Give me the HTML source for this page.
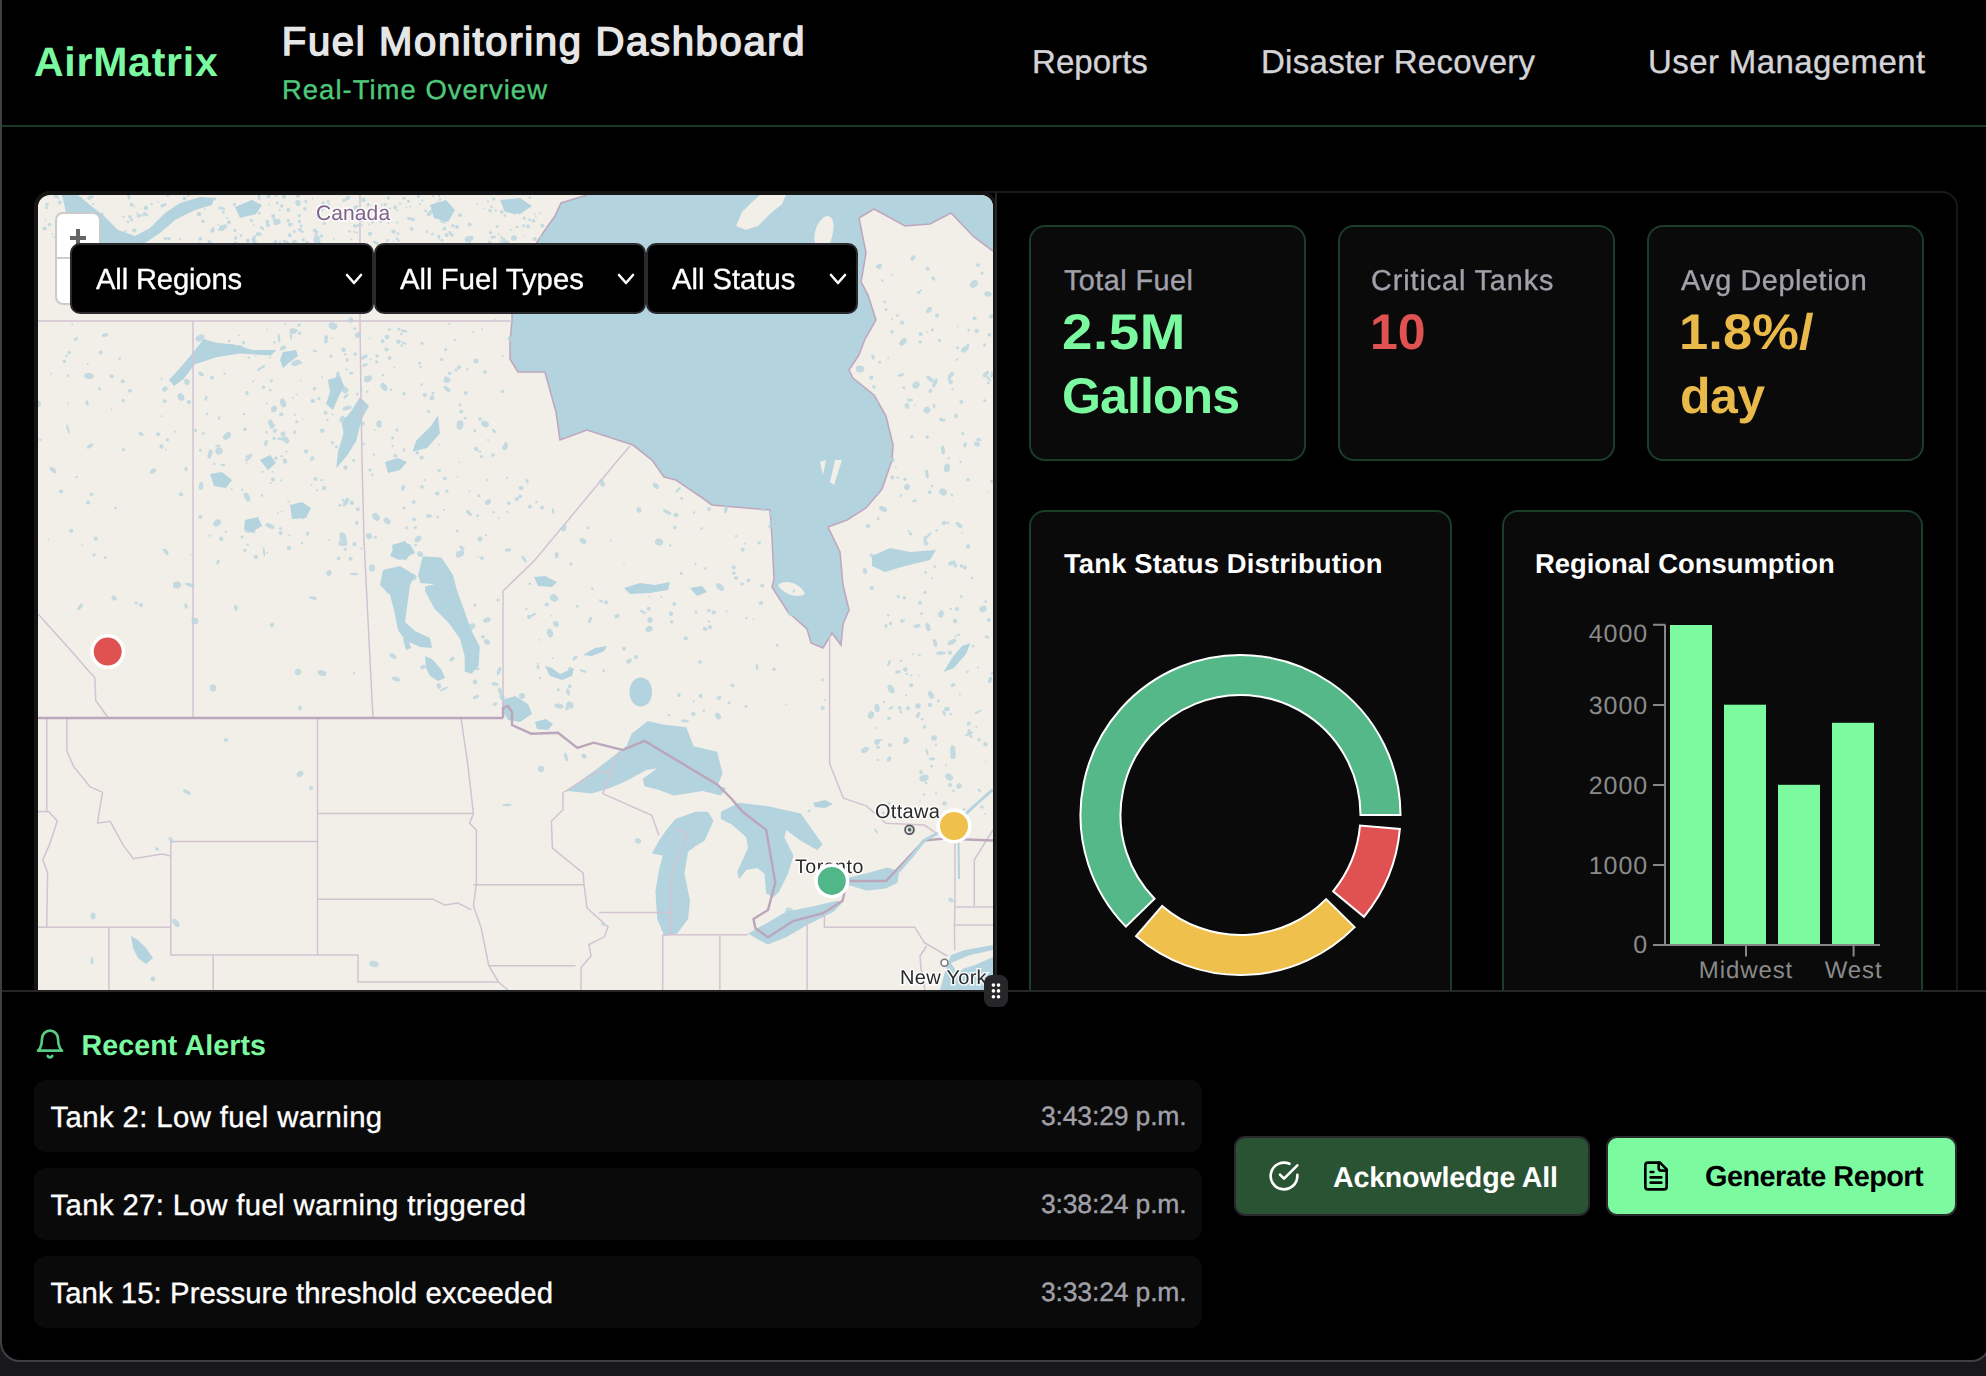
<!DOCTYPE html>
<html><head><meta charset="utf-8">
<style>
*{margin:0;padding:0;box-sizing:border-box}
html,body{width:1986px;height:1376px;overflow:hidden;background:#18181b;font-family:"Liberation Sans",sans-serif;text-rendering:geometricPrecision}
.a{position:absolute;white-space:nowrap;line-height:1}
.rg{-webkit-text-stroke:0.35px currentColor}
#win{position:absolute;left:0;top:-40px;width:1991px;height:1402px;background:#000;border:2px solid #3f3f46;border-radius:20px;overflow:hidden}
</style></head>
<body>
<div id="win"></div>

<!-- header -->
<div class="a" id="t_air" style="left:34px;top:42px;font-size:41px;font-weight:700;color:#7af9a0;letter-spacing:0.75px">AirMatrix</div>
<div class="a" id="t_title" style="left:281.8px;top:22px;font-size:40px;font-weight:400;color:#e6e6e6;letter-spacing:1.68px;-webkit-text-stroke:1.5px #e6e6e6">Fuel Monitoring Dashboard</div>
<div class="a rg" id="t_sub" style="left:282px;top:76.2px;font-size:27.4px;color:#4fca7a;letter-spacing:1.05px">Real-Time Overview</div>
<div class="a rg" id="t_nav1" style="left:1032px;top:45.1px;font-size:33px;color:#d4d4d8;letter-spacing:0.05px">Reports</div>
<div class="a rg" id="t_nav2" style="left:1261px;top:45.1px;font-size:33px;color:#d4d4d8;letter-spacing:0.28px">Disaster Recovery</div>
<div class="a rg" id="t_nav3" style="left:1648px;top:45.1px;font-size:33px;color:#d4d4d8;letter-spacing:0.4px">User Management</div>
<div style="position:absolute;left:2px;top:125px;width:1984px;height:2px;background:#173a26"></div>

<div id="clip" style="position:absolute;left:0;top:0;width:1986px;height:990px;overflow:hidden">
<!-- outer container border -->
<div style="position:absolute;left:34px;top:191px;width:1924px;height:820px;border:2px solid #181818;border-radius:16px"></div>

<!-- MAP -->
<div id="map" style="position:absolute;left:34px;top:191px;width:963px;height:830px;border:4px solid #151515;border-radius:16px;overflow:hidden;background:#f2efe9">
<svg width="955" height="822" viewBox="38 195 955 822" style="position:absolute;left:0;top:0">
<path fill="#b3d3de" d="M587,195 L561,203 L555,216 L545,230 L537,242 L525,280 L512,314 L512,321 L510,341 L510,359 L518,372 L545,372 L556,412 L560,440 L587,430 L633,445 L652,460 L664,477 L676,480 L701,497 L712,505 L770,510 L772,537 L774,579 L772,587 L788,612 L807,629 L811,643 L823,648 L832,633 L841,645 L843,624 L849,610 L843,585 L840,552 L828,527 L847,520 L866,508 L882,489 L892,460 L893,445 L886,416 L874,395 L853,378 L849,370 L859,355 L865,339 L876,320 L868,295 L861,282 L866,253 L859,218 L874,209 L905,226 L930,224 L951,213 L974,237 L993,251 L993,195 Z"/>
<path fill="none" stroke="#bfa8bf" stroke-width="1.6" d="M587,195 L561,203 L555,216 L545,230 L537,242 L525,280 L512,314 L512,321 L510,341 L510,359 L518,372 L545,372 L556,412 L560,440 L587,430 L633,445 L652,460 L664,477 L676,480 L701,497 L712,505 L770,510 L772,537 L774,579 L772,587 L788,612 L807,629 L811,643 L823,648 L832,633 L841,645 L843,624 L849,610 L843,585 L840,552 L828,527 L847,520 L866,508 L882,489 L892,460 L893,445 L886,416 L874,395 L853,378 L849,370 L859,355 L865,339 L876,320 L868,295 L861,282 L866,253 L859,218 L874,209 L905,226 L930,224 L951,213 L974,237 L993,251"/>
<g fill="#b3d3de"><path d="M62,195 L78,195 L90,205 L104,216 L118,230 L135,236 L150,228 L165,213 L180,203 L200,197 L214,198 L212,205 L195,210 L175,220 L160,233 L145,243 L120,246 L100,246 L80,232 L66,212 Z"/><path d="M169,380 L180,368 L191,355 L203.6,339 L216.3,342.7 L234.5,344.5 L252.7,350 L276.3,350 L270.9,355.4 L240,353.6 L216.3,357.3 L194.5,364.5 L183.6,379 L174,386 Z"/><path d="M283,352 L296,350 L298,356 L290,362 L283,368 L280,360 Z"/><path d="M360,397 L369,406 L361.7,419 L356.3,440.8 L347.2,455.4 L336.3,468 L338,451.8 L343.5,433.6 L341.7,422.7 L350.8,411.8 Z"/><path d="M328,380 L340,376 L344,386 L338,398 L333,410 L326,404 L330,392 Z"/><path d="M438,415.4 L439.9,433.6 L427,448 L412.6,451.7 L416.2,440.8 L430.8,426.3 Z"/><path d="M385,462 L398,458 L407,462 L400,470 L388,473 Z"/><path d="M290,505 L302,502 L311,508 L306,518 L292,519 Z"/><path d="M392,545 L405,541 L413,550 L406,560 L394,558 Z"/><path d="M245,520 L258,517 L262,526 L252,532 L244,529 Z"/><path d="M210,474 L222,472 L232,480 L226,488 L214,486 Z"/><path d="M235,207 L252,200 L262,205 L256,214 L240,218 Z"/><path d="M430,205 L446,200 L455,210 L448,222 L434,218 Z"/><path d="M500,200 L520,198 L532,206 L520,214 L505,212 Z"/><path d="M260,460 L270,455 L276,463 L268,470 Z"/><path d="M422.8,556.3 L441.4,557.4 L453,574.9 L456.5,588.8 L462.3,605.1 L470.5,628.4 L479.8,647 L478.6,665.6 L471.6,673.7 L464.7,671.4 L464.7,656.3 L460,638.8 L448.4,622.6 L434.4,608.6 L425.1,591.2 L425.1,586.5 L434.4,584.2 L420.5,583 L418.1,574.9 Z"/><path d="M383,570 L400,566 L415,575 L410,585 L408,600 L405,622 L415,631 L430,638 L432,648 L420,647 L405,640 L398,630 L394,610 L390,595 L380,585 Z"/><path d="M425,656 L432,659 L441,669 L445,678 L438,681 L430,676 L426,668 Z"/><path d="M395,545 L410,544 L415,553 L400,560 L390,556 Z"/><path d="M403,639 L408,638 L411,648 L406,650 Z"/><path d="M640.6,677.5 C648,677.5 652,684 652,692 C652,701 647,706.5 640.6,706.5 C634,706.5 629.5,700 629.5,692 C629.5,684 634,677.5 640.6,677.5 Z"/><path d="M502,700 L515,696 L528,704 L532,714 L520,722 L508,720 L503,712 Z"/><path d="M535,722 L546,719 L553,724 L548,730 L537,729 Z"/><path d="M545,666 L552,668 L560,674 L574,668 L572,676 L562,680 L550,676 Z"/><path d="M583,655 L595,648 L607,646 L604,651 L592,656 Z"/><path d="M534,577 L545,576 L557,582 L552,587 L538,586 Z"/><path d="M624,588 L640,583 L655,585 L670,582 L668,590 L650,593 L630,594 Z"/><path d="M690,588 L702,586 L707,592 L697,596 Z"/><path d="M564.5,791.8 L595.4,770 L626.3,746.3 L631.8,733.6 L648.1,720.9 L662.7,724.5 L686.3,727.3 L693.6,746.3 L717.2,751.8 L722.6,773.6 L717.2,786.3 L726.3,788.1 L720.8,795.4 L702.6,790.9 L673.6,795.4 L659,790 L644.5,786.3 L642.7,779 L657.2,768.2 L646.3,770 L626.3,780.9 L610,788.1 L591.8,793.6 L568.2,790.9 Z"/><path d="M675.4,819 L695.4,811.8 L708,811.8 L713.5,820.8 L704.5,840.8 L695.4,846.3 L688.1,851.7 L684.5,873.5 L690,900.8 L688.1,919 L677.2,933.5 L664.5,936.2 L657.2,919 L655.4,891.7 L659,869.9 L662.7,855.4 L651.8,853.6 L659,840.8 L666.3,829.9 Z"/><path d="M720.8,811.8 L739,802.7 L768,806.3 L800.8,813.6 L809.9,826.3 L822.6,844.5 L817.1,849.9 L800.8,840.8 L786.2,829.9 L784.4,837.2 L793.5,855.4 L788.1,873.5 L779,891.7 L773.5,897.2 L766.2,893.5 L764.4,873.5 L757.2,868.1 L746.3,869.9 L739,879 L737.2,871.7 L748,848.1 L746.3,837.2 L731.7,824.5 L720.8,819 Z"/><path d="M748.1,933.5 L764.4,924.4 L786.2,911.7 L813.5,906.3 L837.1,900.8 L842.6,902.6 L833.5,911.7 L808,924.4 L786.2,937.2 L768,944.4 L757.2,939 Z"/><path d="M843.4,879 L866.5,873.2 L887.7,867.5 L899.3,871.3 L897.3,882.9 L885.8,888.6 L866.5,890.6 L847.3,884.8 Z"/><path d="M813,803 L825,800 L833,804 L825,808 L815,807 Z"/><path d="M131,936 L138,940 L146,948 L153,958 L146,964 L138,958 L133,948 Z"/><path d="M943.5,672 L952,658 L962,646 L970.5,643 L966,654 L954,668 Z"/><path d="M872,556 L890,548 L910,552 L936,550 L930,560 L905,566 L885,572 L872,566 Z"/><path d="M957.5,842 L959.5,842 L960,879 L958,879 Z"/><path d="M940,990 L946,968 L951,955 L965,950 L993,945 L993,990 Z"/></g>
<g fill="#f2efe9"><path d="M951,963 L970,955 L993,950 L993,957 L975,965 L956,971 Z"/><path d="M736,226 L742,212 L752,202 L760,195 L786,195 L782,204 L770,214 L758,226 L746,230 Z"/><path d="M815,243 C812,232 820,216 828,216 C836,218 834,232 830,243 Z"/><path d="M778,585 C784,579 800,582 805,594 C800,598 784,596 778,585 Z"/><path d="M820,462 L826,460 L823,475 Z"/><path d="M835,460 L842,460 L834,485 L830,482 Z"/></g>
<g fill="none" stroke="#d2c3d2" stroke-width="1.5"><path d="M38,321 H512"/><path d="M360,195 V321 L361,400 L362,460 L364,540 L368,620 L370,660 L373,718"/><path d="M193,321 V718"/><path d="M38,614 L51.5,629 L72.7,652.5 L86,668 L94.8,677.6 L95.8,700.7 L108.3,718"/><path d="M630,446 L618,460 L535,560 L503,591 V708"/><path d="M829.6,635 V763.5 L843.4,798.2 L866.5,805.9 L885.8,823.2 L924.3,825.1 L935.8,832.8"/><path d="M46.7,718 V811.6 L48.6,811.6 L57.3,821 L49.6,844.4 L42.8,859.8 L47.6,873 L46.7,927.2"/><path d="M38,811.6 H48"/><path d="M66.9,718 V751 L73.6,766.4 L90,786.6 L102.5,792.4 L98.6,815.5 L97.7,823.2 L110.2,821.3 L122.7,844.4 L133.3,858.8 L162.2,854 L170.8,855.9"/><path d="M170.8,841.5 H317.5 M170.8,841.5 V955 H358 V982 H498.5"/><path d="M38,927.2 H170.8 M108.9,927.2 V990 M213.2,955 V990"/><path d="M317.5,718 V955 M317.5,813.6 H473.4 M317.5,899.2 H433 L444.6,905 L458,903 L471.5,909.8"/><path d="M461,718 L467.7,763.5 L473.4,813.6 L469.6,823.2 L476.3,830 L476.3,884.8 L473.4,906 L481,927.2 L488.8,965.7 L498.5,982 L508,990"/><path d="M473.4,884.8 H584 M488.8,965.7 H575.5"/><path d="M584,884.8 L587,908 L608,927 L604.4,936.8 L589,944.5 L591,956 L581,967.6 L581,990"/><path d="M563,791.4 V809.7 L551.4,821.3 L552.4,848.2 L583.2,873.2 L584,884.8"/><path d="M602.7,793.6 L651.8,815.4 L659,835.4"/><path d="M564.5,791.8 L597.2,771.8 L610,771.8 M619,751.8 L602.7,793.6"/><path d="M673.6,828.1 L688.1,833.6 L671.8,873.5 L670,935.3"/><path d="M599,912.6 H671.8 M662.7,934.8 H748 M662.7,934.8 V990 M719.9,934.8 V990 M807.1,919.5 V990"/><path d="M824.4,915.3 V927.2 H914.7 L924.3,942.6 L947.4,956"/><path d="M955,840.5 V900 L954.5,925 L954.7,950 M974.3,906 V859.8 L993,830 M955,907 H993 M955,925 H993 M926.5,946 L920,956 L921,968.5 L925,990"/></g>
<g fill="none" stroke="#bba6bb" stroke-width="2.4"><path d="M38,718 H503"/><path d="M503,718 V708 L508,706 L512,712 L512,725 L531.2,733.7 L558,732.7 L577.4,748 L593.6,742.7 L622.7,750 L644.5,740.9 L717.2,784.5 L731.7,799 L742.6,811.8 L766.2,829.9 L775.3,882.6 L768,909.9 L753.5,919 L755.3,928.1 L768,937.2 L793.5,920.8 L822.6,913.5 L842.6,900.8 L847,881 L886,881 L924.3,840.5 L943.5,838.6 L993,840.5"/></g>
<g fill="#b3d3de" opacity="0.75"><ellipse cx="304" cy="250" rx="3.8" ry="1.2" transform="rotate(96 304 250)"/><ellipse cx="317" cy="216" rx="3.3" ry="1.1" transform="rotate(78 317 216)"/><ellipse cx="222" cy="228" rx="3.0" ry="3.1" transform="rotate(22 222 228)"/><ellipse cx="271" cy="424" rx="4.8" ry="2.4" transform="rotate(71 271 424)"/><ellipse cx="512" cy="212" rx="4.5" ry="1.7" transform="rotate(26 512 212)"/><ellipse cx="238" cy="308" rx="4.4" ry="1.5" transform="rotate(105 238 308)"/><ellipse cx="404" cy="331" rx="3.4" ry="1.2" transform="rotate(11 404 331)"/><ellipse cx="266" cy="443" rx="3.0" ry="1.8" transform="rotate(105 266 443)"/><ellipse cx="345" cy="304" rx="4.3" ry="2.7" transform="rotate(44 345 304)"/><ellipse cx="384" cy="387" rx="4.6" ry="2.8" transform="rotate(52 384 387)"/><ellipse cx="514" cy="238" rx="3.0" ry="2.9" transform="rotate(27 514 238)"/><ellipse cx="356" cy="209" rx="3.8" ry="2.9" transform="rotate(103 356 209)"/><ellipse cx="480" cy="310" rx="3.9" ry="2.5" transform="rotate(104 480 310)"/><ellipse cx="346" cy="502" rx="4.8" ry="2.2" transform="rotate(120 346 502)"/><ellipse cx="219" cy="451" rx="3.8" ry="3.5" transform="rotate(148 219 451)"/><ellipse cx="291" cy="336" rx="3.8" ry="1.1" transform="rotate(83 291 336)"/><ellipse cx="254" cy="238" rx="1.7" ry="2.9" transform="rotate(23 254 238)"/><ellipse cx="279" cy="338" rx="4.5" ry="1.2" transform="rotate(81 279 338)"/><ellipse cx="376" cy="517" rx="4.4" ry="3.2" transform="rotate(50 376 517)"/><ellipse cx="333" cy="326" rx="4.6" ry="3.4" transform="rotate(27 333 326)"/><ellipse cx="256" cy="280" rx="2.3" ry="2.2" transform="rotate(106 256 280)"/><ellipse cx="284" cy="196" rx="3.0" ry="1.9" transform="rotate(102 284 196)"/><ellipse cx="505" cy="447" rx="3.3" ry="2.5" transform="rotate(122 505 447)"/><ellipse cx="217" cy="523" rx="4.2" ry="3.2" transform="rotate(144 217 523)"/><ellipse cx="326" cy="341" rx="1.9" ry="2.6" transform="rotate(11 326 341)"/><ellipse cx="222" cy="271" rx="2.1" ry="1.9" transform="rotate(9 222 271)"/><ellipse cx="200" cy="250" rx="1.9" ry="1.9" transform="rotate(5 200 250)"/><ellipse cx="480" cy="419" rx="2.0" ry="1.6" transform="rotate(63 480 419)"/><ellipse cx="317" cy="240" rx="4.5" ry="3.5" transform="rotate(84 317 240)"/><ellipse cx="355" cy="226" rx="1.9" ry="1.9" transform="rotate(48 355 226)"/><ellipse cx="465" cy="254" rx="1.6" ry="3.4" transform="rotate(95 465 254)"/><ellipse cx="247" cy="393" rx="1.6" ry="2.3" transform="rotate(176 247 393)"/><ellipse cx="476" cy="449" rx="2.4" ry="1.9" transform="rotate(30 476 449)"/><ellipse cx="447" cy="389" rx="4.2" ry="1.8" transform="rotate(40 447 389)"/><ellipse cx="460" cy="554" rx="4.5" ry="3.0" transform="rotate(147 460 554)"/><ellipse cx="437" cy="278" rx="3.3" ry="1.9" transform="rotate(5 437 278)"/><ellipse cx="209" cy="297" rx="2.4" ry="2.7" transform="rotate(172 209 297)"/><ellipse cx="343" cy="537" rx="5.0" ry="3.4" transform="rotate(66 343 537)"/><ellipse cx="271" cy="278" rx="2.2" ry="1.5" transform="rotate(112 271 278)"/><ellipse cx="488" cy="502" rx="3.2" ry="2.6" transform="rotate(144 488 502)"/><ellipse cx="227" cy="436" rx="4.7" ry="3.0" transform="rotate(135 227 436)"/><ellipse cx="353" cy="260" rx="4.3" ry="1.8" transform="rotate(144 353 260)"/><ellipse cx="511" cy="339" rx="2.9" ry="3.4" transform="rotate(130 511 339)"/><ellipse cx="254" cy="241" rx="2.0" ry="3.3" transform="rotate(145 254 241)"/><ellipse cx="247" cy="497" rx="4.9" ry="2.6" transform="rotate(63 247 497)"/><ellipse cx="376" cy="243" rx="1.5" ry="3.4" transform="rotate(117 376 243)"/><ellipse cx="369" cy="536" rx="3.0" ry="3.2" transform="rotate(149 369 536)"/><ellipse cx="268" cy="287" rx="2.5" ry="1.6" transform="rotate(106 268 287)"/><ellipse cx="283" cy="348" rx="2.0" ry="3.3" transform="rotate(64 283 348)"/><ellipse cx="347" cy="408" rx="4.7" ry="2.1" transform="rotate(165 347 408)"/><ellipse cx="361" cy="389" rx="3.3" ry="1.0" transform="rotate(79 361 389)"/><ellipse cx="259" cy="196" rx="4.3" ry="1.4" transform="rotate(85 259 196)"/><ellipse cx="432" cy="398" rx="2.6" ry="2.3" transform="rotate(100 432 398)"/><ellipse cx="451" cy="234" rx="3.5" ry="1.6" transform="rotate(50 451 234)"/><ellipse cx="447" cy="380" rx="3.5" ry="2.9" transform="rotate(164 447 380)"/><ellipse cx="342" cy="419" rx="3.3" ry="2.3" transform="rotate(125 342 419)"/><ellipse cx="345" cy="390" rx="3.2" ry="3.4" transform="rotate(126 345 390)"/><ellipse cx="480" cy="539" rx="2.4" ry="2.4" transform="rotate(170 480 539)"/><ellipse cx="469" cy="245" rx="1.9" ry="2.1" transform="rotate(13 469 245)"/><ellipse cx="277" cy="222" rx="3.8" ry="3.0" transform="rotate(161 277 222)"/><ellipse cx="249" cy="456" rx="3.8" ry="1.4" transform="rotate(159 249 456)"/><ellipse cx="510" cy="275" rx="4.8" ry="2.0" transform="rotate(88 510 275)"/><ellipse cx="517" cy="499" rx="2.1" ry="2.1" transform="rotate(93 517 499)"/><ellipse cx="309" cy="266" rx="2.6" ry="2.8" transform="rotate(4 309 266)"/><ellipse cx="377" cy="356" rx="1.6" ry="1.8" transform="rotate(112 377 356)"/><ellipse cx="364" cy="218" rx="4.9" ry="3.0" transform="rotate(175 364 218)"/><ellipse cx="234" cy="292" rx="1.6" ry="2.9" transform="rotate(49 234 292)"/><ellipse cx="241" cy="349" rx="4.7" ry="3.0" transform="rotate(47 241 349)"/><ellipse cx="248" cy="530" rx="3.5" ry="2.8" transform="rotate(16 248 530)"/><ellipse cx="218" cy="446" rx="3.0" ry="1.2" transform="rotate(169 218 446)"/><ellipse cx="403" cy="488" rx="1.8" ry="3.1" transform="rotate(12 403 488)"/><ellipse cx="476" cy="361" rx="2.7" ry="2.4" transform="rotate(167 476 361)"/><ellipse cx="286" cy="242" rx="3.3" ry="1.6" transform="rotate(20 286 242)"/><ellipse cx="252" cy="213" rx="2.2" ry="1.8" transform="rotate(55 252 213)"/><ellipse cx="443" cy="301" rx="3.3" ry="1.4" transform="rotate(62 443 301)"/><ellipse cx="206" cy="286" rx="1.6" ry="2.8" transform="rotate(99 206 286)"/><ellipse cx="261" cy="368" rx="4.8" ry="1.3" transform="rotate(147 261 368)"/><ellipse cx="338" cy="376" rx="4.4" ry="2.0" transform="rotate(91 338 376)"/><ellipse cx="420" cy="554" rx="2.7" ry="3.1" transform="rotate(127 420 554)"/><ellipse cx="404" cy="343" rx="2.7" ry="1.1" transform="rotate(23 404 343)"/><ellipse cx="223" cy="465" rx="2.4" ry="1.4" transform="rotate(15 223 465)"/><ellipse cx="469" cy="513" rx="3.8" ry="1.7" transform="rotate(44 469 513)"/><ellipse cx="294" cy="363" rx="2.1" ry="2.1" transform="rotate(47 294 363)"/><ellipse cx="508" cy="550" rx="3.4" ry="1.6" transform="rotate(174 508 550)"/><ellipse cx="299" cy="325" rx="1.5" ry="2.0" transform="rotate(85 299 325)"/><ellipse cx="361" cy="268" rx="3.3" ry="1.0" transform="rotate(48 361 268)"/><ellipse cx="229" cy="341" rx="1.6" ry="1.1" transform="rotate(55 229 341)"/><ellipse cx="274" cy="409" rx="3.4" ry="2.9" transform="rotate(118 274 409)"/><ellipse cx="429" cy="516" rx="2.9" ry="1.8" transform="rotate(177 429 516)"/><ellipse cx="248" cy="459" rx="3.8" ry="1.1" transform="rotate(150 248 459)"/><ellipse cx="485" cy="424" rx="4.1" ry="3.0" transform="rotate(25 485 424)"/><ellipse cx="368" cy="379" rx="4.4" ry="3.0" transform="rotate(149 368 379)"/><ellipse cx="387" cy="521" rx="3.9" ry="2.7" transform="rotate(41 387 521)"/><ellipse cx="210" cy="244" rx="2.8" ry="1.3" transform="rotate(150 210 244)"/><ellipse cx="379" cy="424" rx="3.7" ry="2.7" transform="rotate(88 379 424)"/><ellipse cx="201" cy="486" rx="4.1" ry="2.3" transform="rotate(96 201 486)"/><ellipse cx="411" cy="219" rx="4.1" ry="1.6" transform="rotate(13 411 219)"/><ellipse cx="285" cy="461" rx="2.2" ry="2.8" transform="rotate(176 285 461)"/><ellipse cx="358" cy="335" rx="3.2" ry="2.7" transform="rotate(138 358 335)"/><ellipse cx="397" cy="430" rx="1.8" ry="1.4" transform="rotate(46 397 430)"/><ellipse cx="438" cy="306" rx="3.5" ry="1.0" transform="rotate(11 438 306)"/><ellipse cx="286" cy="440" rx="3.9" ry="2.7" transform="rotate(52 286 440)"/><ellipse cx="365" cy="365" rx="3.1" ry="1.3" transform="rotate(161 365 365)"/><ellipse cx="264" cy="552" rx="4.8" ry="1.0" transform="rotate(83 264 552)"/><ellipse cx="462" cy="548" rx="3.1" ry="1.7" transform="rotate(38 462 548)"/><ellipse cx="503" cy="272" rx="3.5" ry="1.4" transform="rotate(94 503 272)"/><ellipse cx="505" cy="243" rx="4.4" ry="2.3" transform="rotate(160 505 243)"/><ellipse cx="425" cy="279" rx="4.6" ry="2.2" transform="rotate(4 425 279)"/><ellipse cx="201" cy="374" rx="3.1" ry="1.8" transform="rotate(25 201 374)"/><ellipse cx="310" cy="310" rx="4.4" ry="1.0" transform="rotate(135 310 310)"/><ellipse cx="469" cy="239" rx="4.7" ry="2.8" transform="rotate(162 469 239)"/><ellipse cx="293" cy="331" rx="2.9" ry="3.5" transform="rotate(106 293 331)"/><ellipse cx="315" cy="351" rx="2.5" ry="1.1" transform="rotate(18 315 351)"/><ellipse cx="467" cy="299" rx="4.8" ry="1.6" transform="rotate(48 467 299)"/><ellipse cx="364" cy="264" rx="2.8" ry="3.4" transform="rotate(159 364 264)"/><ellipse cx="460" cy="425" rx="4.7" ry="3.4" transform="rotate(99 460 425)"/><ellipse cx="430" cy="213" rx="4.1" ry="2.1" transform="rotate(135 430 213)"/><ellipse cx="406" cy="299" rx="1.7" ry="3.3" transform="rotate(23 406 299)"/><ellipse cx="351" cy="320" rx="2.5" ry="2.8" transform="rotate(176 351 320)"/><ellipse cx="283" cy="434" rx="2.6" ry="2.4" transform="rotate(71 283 434)"/><ellipse cx="254" cy="254" rx="2.2" ry="3.3" transform="rotate(89 254 254)"/><ellipse cx="270" cy="526" rx="5.0" ry="2.1" transform="rotate(25 270 526)"/><ellipse cx="262" cy="228" rx="2.7" ry="1.2" transform="rotate(43 262 228)"/><ellipse cx="283" cy="403" rx="4.6" ry="2.9" transform="rotate(74 283 403)"/><ellipse cx="332" cy="386" rx="2.8" ry="1.8" transform="rotate(11 332 386)"/><ellipse cx="289" cy="548" rx="1.9" ry="2.3" transform="rotate(113 289 548)"/><ellipse cx="476" cy="274" rx="2.4" ry="1.6" transform="rotate(72 476 274)"/><ellipse cx="343" cy="543" rx="4.5" ry="3.2" transform="rotate(4 343 543)"/><ellipse cx="210" cy="454" rx="4.6" ry="2.2" transform="rotate(106 210 454)"/><ellipse cx="200" cy="338" rx="4.7" ry="3.1" transform="rotate(154 200 338)"/><ellipse cx="511" cy="286" rx="1.9" ry="1.4" transform="rotate(94 511 286)"/><ellipse cx="418" cy="539" rx="4.0" ry="2.6" transform="rotate(138 418 539)"/><ellipse cx="346" cy="396" rx="1.6" ry="3.0" transform="rotate(42 346 396)"/><ellipse cx="494" cy="431" rx="2.6" ry="1.3" transform="rotate(45 494 431)"/><ellipse cx="404" cy="450" rx="1.9" ry="1.2" transform="rotate(94 404 450)"/><ellipse cx="387" cy="337" rx="2.3" ry="2.5" transform="rotate(2 387 337)"/><ellipse cx="296" cy="363" rx="4.9" ry="2.6" transform="rotate(159 296 363)"/><ellipse cx="352" cy="281" rx="2.4" ry="3.4" transform="rotate(127 352 281)"/><ellipse cx="298" cy="203" rx="3.2" ry="2.7" transform="rotate(76 298 203)"/><ellipse cx="282" cy="439" rx="4.7" ry="1.6" transform="rotate(6 282 439)"/><ellipse cx="90" cy="446" rx="3.9" ry="1.5" transform="rotate(143 90 446)"/><ellipse cx="153" cy="471" rx="2.2" ry="3.4" transform="rotate(56 153 471)"/><ellipse cx="165" cy="389" rx="2.3" ry="2.9" transform="rotate(53 165 389)"/><ellipse cx="186" cy="469" rx="2.2" ry="1.6" transform="rotate(75 186 469)"/><ellipse cx="141" cy="605" rx="2.0" ry="2.0" transform="rotate(38 141 605)"/><ellipse cx="189" cy="363" rx="1.7" ry="1.2" transform="rotate(71 189 363)"/><ellipse cx="177" cy="585" rx="4.1" ry="3.5" transform="rotate(168 177 585)"/><ellipse cx="89" cy="376" rx="4.8" ry="2.9" transform="rotate(6 89 376)"/><ellipse cx="141" cy="434" rx="2.8" ry="1.8" transform="rotate(30 141 434)"/><ellipse cx="38" cy="404" rx="2.7" ry="3.4" transform="rotate(22 38 404)"/><ellipse cx="187" cy="382" rx="2.7" ry="3.1" transform="rotate(148 187 382)"/><ellipse cx="105" cy="335" rx="3.2" ry="1.9" transform="rotate(166 105 335)"/><ellipse cx="68" cy="429" rx="4.6" ry="1.1" transform="rotate(74 68 429)"/><ellipse cx="164" cy="550" rx="1.6" ry="1.1" transform="rotate(11 164 550)"/><ellipse cx="181" cy="397" rx="4.1" ry="3.2" transform="rotate(61 181 397)"/><ellipse cx="80" cy="607" rx="3.7" ry="1.7" transform="rotate(129 80 607)"/><ellipse cx="87" cy="403" rx="1.5" ry="2.9" transform="rotate(165 87 403)"/><ellipse cx="136" cy="603" rx="1.6" ry="1.6" transform="rotate(86 136 603)"/><ellipse cx="186" cy="606" rx="2.9" ry="1.6" transform="rotate(77 186 606)"/><ellipse cx="114" cy="598" rx="2.1" ry="3.0" transform="rotate(133 114 598)"/><ellipse cx="166" cy="552" rx="3.6" ry="1.8" transform="rotate(58 166 552)"/><ellipse cx="94" cy="555" rx="1.8" ry="1.5" transform="rotate(136 94 555)"/><ellipse cx="76" cy="339" rx="1.6" ry="2.4" transform="rotate(59 76 339)"/><ellipse cx="190" cy="585" rx="5.0" ry="1.7" transform="rotate(15 190 585)"/><ellipse cx="53" cy="470" rx="4.0" ry="2.1" transform="rotate(42 53 470)"/><ellipse cx="649" cy="629" rx="3.9" ry="2.9" transform="rotate(152 649 629)"/><ellipse cx="726" cy="509" rx="4.4" ry="1.7" transform="rotate(102 726 509)"/><ellipse cx="636" cy="657" rx="2.2" ry="1.6" transform="rotate(44 636 657)"/><ellipse cx="568" cy="692" rx="3.5" ry="1.8" transform="rotate(71 568 692)"/><ellipse cx="828" cy="602" rx="2.3" ry="3.0" transform="rotate(118 828 602)"/><ellipse cx="827" cy="505" rx="3.2" ry="3.0" transform="rotate(151 827 505)"/><ellipse cx="803" cy="490" rx="2.5" ry="1.3" transform="rotate(34 803 490)"/><ellipse cx="822" cy="620" rx="4.8" ry="1.9" transform="rotate(156 822 620)"/><ellipse cx="659" cy="542" rx="4.2" ry="3.4" transform="rotate(19 659 542)"/><ellipse cx="705" cy="629" rx="2.3" ry="1.9" transform="rotate(25 705 629)"/><ellipse cx="583" cy="541" rx="3.6" ry="2.6" transform="rotate(37 583 541)"/><ellipse cx="524" cy="559" rx="3.9" ry="1.5" transform="rotate(56 524 559)"/><ellipse cx="583" cy="671" rx="3.4" ry="1.2" transform="rotate(18 583 671)"/><ellipse cx="643" cy="612" rx="3.7" ry="1.2" transform="rotate(29 643 612)"/><ellipse cx="736" cy="578" rx="2.5" ry="1.8" transform="rotate(172 736 578)"/><ellipse cx="617" cy="616" rx="2.8" ry="2.0" transform="rotate(156 617 616)"/><ellipse cx="829" cy="567" rx="2.2" ry="2.8" transform="rotate(37 829 567)"/><ellipse cx="522" cy="696" rx="3.0" ry="3.1" transform="rotate(73 522 696)"/><ellipse cx="794" cy="591" rx="2.1" ry="1.0" transform="rotate(99 794 591)"/><ellipse cx="719" cy="698" rx="1.8" ry="2.6" transform="rotate(67 719 698)"/><ellipse cx="676" cy="515" rx="2.5" ry="2.3" transform="rotate(167 676 515)"/><ellipse cx="554" cy="598" rx="4.3" ry="3.4" transform="rotate(36 554 598)"/><ellipse cx="559" cy="706" rx="4.9" ry="2.2" transform="rotate(10 559 706)"/><ellipse cx="807" cy="573" rx="4.7" ry="2.6" transform="rotate(148 807 573)"/><ellipse cx="570" cy="669" rx="2.3" ry="2.0" transform="rotate(152 570 669)"/><ellipse cx="777" cy="524" rx="2.3" ry="2.0" transform="rotate(93 777 524)"/><ellipse cx="639" cy="510" rx="2.4" ry="2.8" transform="rotate(162 639 510)"/><ellipse cx="533" cy="615" rx="4.2" ry="1.1" transform="rotate(151 533 615)"/><ellipse cx="556" cy="624" rx="3.4" ry="2.6" transform="rotate(55 556 624)"/><ellipse cx="650" cy="620" rx="3.0" ry="2.6" transform="rotate(80 650 620)"/><ellipse cx="656" cy="486" rx="3.7" ry="2.2" transform="rotate(42 656 486)"/><ellipse cx="757" cy="667" rx="3.1" ry="1.4" transform="rotate(85 757 667)"/><ellipse cx="553" cy="511" rx="3.0" ry="1.2" transform="rotate(80 553 511)"/><ellipse cx="678" cy="490" rx="3.7" ry="1.2" transform="rotate(132 678 490)"/><ellipse cx="761" cy="603" rx="1.7" ry="2.3" transform="rotate(68 761 603)"/><ellipse cx="815" cy="513" rx="4.5" ry="3.5" transform="rotate(132 815 513)"/><ellipse cx="773" cy="526" rx="4.9" ry="2.2" transform="rotate(172 773 526)"/><ellipse cx="804" cy="520" rx="4.3" ry="3.3" transform="rotate(12 804 520)"/><ellipse cx="629" cy="661" rx="2.1" ry="3.2" transform="rotate(49 629 661)"/><ellipse cx="773" cy="514" rx="3.3" ry="3.3" transform="rotate(37 773 514)"/><ellipse cx="601" cy="601" rx="2.6" ry="1.1" transform="rotate(33 601 601)"/><ellipse cx="570" cy="705" rx="3.9" ry="3.2" transform="rotate(30 570 705)"/><ellipse cx="763" cy="508" rx="3.4" ry="2.6" transform="rotate(65 763 508)"/><ellipse cx="791" cy="613" rx="3.5" ry="3.2" transform="rotate(19 791 613)"/><ellipse cx="828" cy="631" rx="2.9" ry="3.0" transform="rotate(48 828 631)"/><ellipse cx="827" cy="619" rx="2.8" ry="2.9" transform="rotate(80 827 619)"/><ellipse cx="575" cy="658" rx="1.7" ry="3.0" transform="rotate(46 575 658)"/><ellipse cx="718" cy="716" rx="3.6" ry="2.7" transform="rotate(56 718 716)"/><ellipse cx="521" cy="488" rx="2.0" ry="2.5" transform="rotate(78 521 488)"/><ellipse cx="679" cy="695" rx="2.0" ry="1.6" transform="rotate(118 679 695)"/><ellipse cx="527" cy="481" rx="2.7" ry="1.3" transform="rotate(64 527 481)"/><ellipse cx="590" cy="620" rx="3.6" ry="1.5" transform="rotate(112 590 620)"/><ellipse cx="667" cy="512" rx="4.8" ry="1.6" transform="rotate(27 667 512)"/><ellipse cx="550" cy="633" rx="4.5" ry="3.0" transform="rotate(72 550 633)"/><ellipse cx="602" cy="483" rx="3.8" ry="2.4" transform="rotate(63 602 483)"/><ellipse cx="720" cy="587" rx="4.8" ry="2.8" transform="rotate(45 720 587)"/><ellipse cx="800" cy="491" rx="3.4" ry="2.0" transform="rotate(43 800 491)"/><ellipse cx="538" cy="667" rx="1.5" ry="2.4" transform="rotate(169 538 667)"/><ellipse cx="564" cy="528" rx="3.6" ry="2.3" transform="rotate(115 564 528)"/><ellipse cx="772" cy="522" rx="2.6" ry="1.8" transform="rotate(9 772 522)"/><ellipse cx="978" cy="712" rx="4.0" ry="1.0" transform="rotate(152 978 712)"/><ellipse cx="959" cy="525" rx="4.1" ry="2.1" transform="rotate(41 959 525)"/><ellipse cx="874" cy="387" rx="1.6" ry="1.8" transform="rotate(135 874 387)"/><ellipse cx="952" cy="749" rx="4.0" ry="1.7" transform="rotate(100 952 749)"/><ellipse cx="918" cy="715" rx="3.3" ry="1.7" transform="rotate(116 918 715)"/><ellipse cx="988" cy="378" rx="4.6" ry="1.0" transform="rotate(47 988 378)"/><ellipse cx="891" cy="689" rx="4.8" ry="2.9" transform="rotate(59 891 689)"/><ellipse cx="977" cy="444" rx="2.3" ry="3.3" transform="rotate(114 977 444)"/><ellipse cx="952" cy="642" rx="4.9" ry="2.2" transform="rotate(151 952 642)"/><ellipse cx="953" cy="756" rx="3.0" ry="2.8" transform="rotate(103 953 756)"/><ellipse cx="901" cy="375" rx="3.7" ry="1.2" transform="rotate(164 901 375)"/><ellipse cx="879" cy="266" rx="1.9" ry="3.3" transform="rotate(62 879 266)"/><ellipse cx="879" cy="267" rx="1.6" ry="2.7" transform="rotate(114 879 267)"/><ellipse cx="953" cy="685" rx="1.7" ry="2.5" transform="rotate(65 953 685)"/><ellipse cx="969" cy="734" rx="4.6" ry="1.2" transform="rotate(156 969 734)"/><ellipse cx="982" cy="807" rx="1.9" ry="1.5" transform="rotate(20 982 807)"/><ellipse cx="865" cy="750" rx="4.3" ry="2.6" transform="rotate(149 865 750)"/><ellipse cx="944" cy="420" rx="1.8" ry="1.2" transform="rotate(136 944 420)"/><ellipse cx="887" cy="438" rx="3.0" ry="1.1" transform="rotate(46 887 438)"/><ellipse cx="898" cy="672" rx="2.8" ry="1.8" transform="rotate(174 898 672)"/><ellipse cx="927" cy="752" rx="3.7" ry="1.1" transform="rotate(74 927 752)"/><ellipse cx="918" cy="706" rx="2.7" ry="2.8" transform="rotate(97 918 706)"/><ellipse cx="889" cy="759" rx="1.8" ry="3.0" transform="rotate(31 889 759)"/><ellipse cx="860" cy="369" rx="4.2" ry="3.4" transform="rotate(1 860 369)"/><ellipse cx="925" cy="540" rx="4.3" ry="1.5" transform="rotate(89 925 540)"/><ellipse cx="906" cy="741" rx="2.4" ry="3.4" transform="rotate(51 906 741)"/><ellipse cx="889" cy="663" rx="3.2" ry="1.3" transform="rotate(115 889 663)"/><ellipse cx="871" cy="715" rx="3.9" ry="3.0" transform="rotate(113 871 715)"/><ellipse cx="907" cy="487" rx="2.9" ry="3.2" transform="rotate(16 907 487)"/><ellipse cx="978" cy="265" rx="2.2" ry="1.7" transform="rotate(162 978 265)"/><ellipse cx="927" cy="474" rx="4.6" ry="1.6" transform="rotate(83 927 474)"/><ellipse cx="931" cy="695" rx="4.1" ry="2.6" transform="rotate(63 931 695)"/><ellipse cx="903" cy="342" rx="4.5" ry="2.7" transform="rotate(134 903 342)"/><ellipse cx="883" cy="509" rx="4.2" ry="2.4" transform="rotate(23 883 509)"/><ellipse cx="921" cy="772" rx="2.3" ry="1.5" transform="rotate(54 921 772)"/><ellipse cx="954" cy="748" rx="2.0" ry="1.4" transform="rotate(45 954 748)"/><ellipse cx="903" cy="558" rx="2.1" ry="1.8" transform="rotate(34 903 558)"/><ellipse cx="990" cy="680" rx="1.9" ry="3.4" transform="rotate(18 990 680)"/><ellipse cx="911" cy="830" rx="4.3" ry="2.8" transform="rotate(78 911 830)"/><ellipse cx="886" cy="626" rx="1.9" ry="1.5" transform="rotate(70 886 626)"/><ellipse cx="865" cy="485" rx="4.3" ry="2.7" transform="rotate(90 865 485)"/><ellipse cx="944" cy="523" rx="2.0" ry="2.5" transform="rotate(73 944 523)"/><ellipse cx="959" cy="786" rx="3.0" ry="2.4" transform="rotate(135 959 786)"/><ellipse cx="916" cy="385" rx="4.0" ry="3.2" transform="rotate(139 916 385)"/><ellipse cx="953" cy="753" rx="3.9" ry="2.6" transform="rotate(82 953 753)"/><ellipse cx="902" cy="621" rx="1.8" ry="2.0" transform="rotate(141 902 621)"/><ellipse cx="955" cy="621" rx="2.4" ry="2.1" transform="rotate(82 955 621)"/><ellipse cx="943" cy="492" rx="3.9" ry="3.3" transform="rotate(33 943 492)"/><ellipse cx="947" cy="709" rx="2.9" ry="2.2" transform="rotate(175 947 709)"/><ellipse cx="865" cy="571" rx="2.1" ry="3.0" transform="rotate(169 865 571)"/><ellipse cx="929" cy="310" rx="3.5" ry="2.4" transform="rotate(129 929 310)"/><ellipse cx="928" cy="627" rx="4.4" ry="2.3" transform="rotate(74 928 627)"/><ellipse cx="986" cy="374" rx="3.9" ry="2.0" transform="rotate(137 986 374)"/><ellipse cx="876" cy="831" rx="2.7" ry="1.1" transform="rotate(49 876 831)"/><ellipse cx="913" cy="258" rx="3.0" ry="2.1" transform="rotate(126 913 258)"/><ellipse cx="907" cy="406" rx="2.3" ry="2.9" transform="rotate(169 907 406)"/><ellipse cx="930" cy="379" rx="4.3" ry="2.0" transform="rotate(38 930 379)"/><ellipse cx="877" cy="708" rx="4.3" ry="2.6" transform="rotate(84 877 708)"/><ellipse cx="935" cy="383" rx="4.9" ry="1.9" transform="rotate(115 935 383)"/><ellipse cx="969" cy="732" rx="3.1" ry="1.7" transform="rotate(99 969 732)"/><ellipse cx="877" cy="742" rx="2.7" ry="3.1" transform="rotate(48 877 742)"/><ellipse cx="910" cy="400" rx="3.0" ry="1.5" transform="rotate(0 910 400)"/><ellipse cx="956" cy="416" rx="2.4" ry="1.8" transform="rotate(86 956 416)"/><ellipse cx="917" cy="626" rx="3.8" ry="1.9" transform="rotate(167 917 626)"/><ellipse cx="974" cy="284" rx="4.4" ry="3.3" transform="rotate(141 974 284)"/><ellipse cx="879" cy="740" rx="3.7" ry="1.0" transform="rotate(2 879 740)"/><ellipse cx="987" cy="637" rx="2.4" ry="1.3" transform="rotate(26 987 637)"/><ellipse cx="891" cy="708" rx="2.7" ry="1.4" transform="rotate(163 891 708)"/><ellipse cx="965" cy="349" rx="4.6" ry="2.5" transform="rotate(141 965 349)"/><ellipse cx="949" cy="777" rx="4.3" ry="3.1" transform="rotate(36 949 777)"/><ellipse cx="952" cy="563" rx="4.1" ry="2.1" transform="rotate(159 952 563)"/><ellipse cx="934" cy="406" rx="2.3" ry="1.3" transform="rotate(89 934 406)"/><ellipse cx="868" cy="526" rx="2.0" ry="2.2" transform="rotate(90 868 526)"/><ellipse cx="932" cy="759" rx="1.5" ry="3.1" transform="rotate(84 932 759)"/><ellipse cx="935" cy="643" rx="4.4" ry="1.9" transform="rotate(75 935 643)"/><ellipse cx="988" cy="294" rx="3.7" ry="2.6" transform="rotate(5 988 294)"/><ellipse cx="941" cy="653" rx="4.8" ry="1.8" transform="rotate(177 941 653)"/><ellipse cx="928" cy="536" rx="4.6" ry="1.1" transform="rotate(129 928 536)"/><ellipse cx="943" cy="450" rx="4.5" ry="1.9" transform="rotate(85 943 450)"/><ellipse cx="930" cy="705" rx="2.2" ry="2.1" transform="rotate(76 930 705)"/><ellipse cx="934" cy="738" rx="2.5" ry="3.1" transform="rotate(73 934 738)"/><ellipse cx="927" cy="410" rx="3.3" ry="3.4" transform="rotate(118 927 410)"/><ellipse cx="965" cy="445" rx="2.6" ry="1.7" transform="rotate(106 965 445)"/><ellipse cx="944" cy="713" rx="1.6" ry="2.8" transform="rotate(159 944 713)"/><ellipse cx="933" cy="279" rx="2.6" ry="1.0" transform="rotate(34 933 279)"/><ellipse cx="983" cy="609" rx="3.8" ry="3.0" transform="rotate(164 983 609)"/><ellipse cx="941" cy="614" rx="3.7" ry="2.7" transform="rotate(107 941 614)"/><ellipse cx="951" cy="375" rx="3.8" ry="2.1" transform="rotate(137 951 375)"/><ellipse cx="873" cy="357" rx="1.6" ry="2.9" transform="rotate(165 873 357)"/><ellipse cx="947" cy="468" rx="4.4" ry="3.0" transform="rotate(101 947 468)"/><ellipse cx="236" cy="608" rx="3.0" ry="1.8" transform="rotate(78 236 608)"/><ellipse cx="300" cy="708" rx="1.7" ry="2.4" transform="rotate(7 300 708)"/><ellipse cx="213" cy="688" rx="3.5" ry="3.3" transform="rotate(80 213 688)"/><ellipse cx="195" cy="621" rx="3.6" ry="3.3" transform="rotate(177 195 621)"/><ellipse cx="272" cy="625" rx="1.9" ry="2.6" transform="rotate(38 272 625)"/><ellipse cx="218" cy="562" rx="1.5" ry="2.7" transform="rotate(22 218 562)"/><ellipse cx="354" cy="574" rx="4.5" ry="1.3" transform="rotate(3 354 574)"/><ellipse cx="313" cy="598" rx="4.1" ry="1.5" transform="rotate(9 313 598)"/><ellipse cx="322" cy="673" rx="4.5" ry="2.8" transform="rotate(15 322 673)"/><ellipse cx="298" cy="672" rx="3.1" ry="3.3" transform="rotate(46 298 672)"/><ellipse cx="354" cy="673" rx="1.5" ry="1.0" transform="rotate(117 354 673)"/><ellipse cx="329" cy="573" rx="2.6" ry="2.8" transform="rotate(30 329 573)"/><ellipse cx="483" cy="637" rx="1.7" ry="1.9" transform="rotate(103 483 637)"/><ellipse cx="423" cy="667" rx="2.0" ry="3.0" transform="rotate(65 423 667)"/><ellipse cx="452" cy="659" rx="3.0" ry="2.0" transform="rotate(142 452 659)"/><ellipse cx="495" cy="684" rx="3.5" ry="1.7" transform="rotate(11 495 684)"/><ellipse cx="499" cy="671" rx="4.4" ry="1.8" transform="rotate(109 499 671)"/><ellipse cx="500" cy="691" rx="3.6" ry="1.8" transform="rotate(77 500 691)"/><ellipse cx="487" cy="620" rx="3.9" ry="2.5" transform="rotate(161 487 620)"/><ellipse cx="475" cy="605" rx="1.5" ry="1.7" transform="rotate(76 475 605)"/><ellipse cx="444" cy="689" rx="4.6" ry="1.1" transform="rotate(150 444 689)"/><ellipse cx="476" cy="697" rx="3.5" ry="1.7" transform="rotate(153 476 697)"/><ellipse cx="475" cy="668" rx="4.7" ry="1.9" transform="rotate(15 475 668)"/><ellipse cx="439" cy="686" rx="2.2" ry="2.9" transform="rotate(168 439 686)"/><ellipse cx="393" cy="656" rx="3.9" ry="2.2" transform="rotate(37 393 656)"/><ellipse cx="396" cy="679" rx="4.3" ry="2.1" transform="rotate(16 396 679)"/><ellipse cx="475" cy="682" rx="2.3" ry="2.4" transform="rotate(161 475 682)"/><ellipse cx="487" cy="642" rx="3.2" ry="2.5" transform="rotate(34 487 642)"/><ellipse cx="388" cy="589" rx="4.0" ry="1.9" transform="rotate(102 388 589)"/><ellipse cx="418" cy="642" rx="2.0" ry="1.1" transform="rotate(179 418 642)"/><ellipse cx="413" cy="577" rx="3.7" ry="3.0" transform="rotate(28 413 577)"/><ellipse cx="445" cy="614" rx="3.3" ry="1.1" transform="rotate(6 445 614)"/><ellipse cx="502" cy="697" rx="3.2" ry="2.4" transform="rotate(47 502 697)"/><ellipse cx="471" cy="627" rx="4.8" ry="2.9" transform="rotate(147 471 627)"/><ellipse cx="498" cy="600" rx="1.6" ry="1.5" transform="rotate(33 498 600)"/><ellipse cx="372" cy="568" rx="3.5" ry="3.2" transform="rotate(82 372 568)"/><ellipse cx="495" cy="704" rx="1.7" ry="2.5" transform="rotate(72 495 704)"/><ellipse cx="153" cy="979" rx="2.4" ry="2.4" transform="rotate(115 153 979)"/><ellipse cx="951" cy="900" rx="2.9" ry="2.1" transform="rotate(29 951 900)"/><ellipse cx="960" cy="988" rx="2.3" ry="1.1" transform="rotate(46 960 988)"/><ellipse cx="374" cy="964" rx="4.7" ry="3.1" transform="rotate(8 374 964)"/><ellipse cx="789" cy="911" rx="3.8" ry="3.5" transform="rotate(10 789 911)"/><ellipse cx="176" cy="923" rx="4.8" ry="2.7" transform="rotate(54 176 923)"/><ellipse cx="603" cy="924" rx="1.9" ry="1.8" transform="rotate(46 603 924)"/><ellipse cx="157" cy="849" rx="2.1" ry="1.6" transform="rotate(26 157 849)"/><ellipse cx="685" cy="721" rx="4.0" ry="1.5" transform="rotate(6 685 721)"/><ellipse cx="924" cy="778" rx="4.8" ry="3.2" transform="rotate(160 924 778)"/><ellipse cx="171" cy="840" rx="1.8" ry="3.3" transform="rotate(152 171 840)"/><ellipse cx="638" cy="841" rx="2.7" ry="3.1" transform="rotate(86 638 841)"/><ellipse cx="638" cy="757" rx="2.3" ry="1.1" transform="rotate(128 638 757)"/><ellipse cx="566" cy="757" rx="4.5" ry="1.7" transform="rotate(74 566 757)"/><ellipse cx="187" cy="792" rx="4.4" ry="1.8" transform="rotate(30 187 792)"/><ellipse cx="507" cy="805" rx="4.7" ry="1.3" transform="rotate(176 507 805)"/><ellipse cx="92" cy="961" rx="3.8" ry="1.5" transform="rotate(86 92 961)"/><ellipse cx="311" cy="788" rx="2.2" ry="1.9" transform="rotate(178 311 788)"/><ellipse cx="991" cy="970" rx="1.8" ry="1.7" transform="rotate(161 991 970)"/><ellipse cx="93" cy="916" rx="2.5" ry="3.4" transform="rotate(3 93 916)"/><ellipse cx="809" cy="811" rx="2.0" ry="1.0" transform="rotate(150 809 811)"/><ellipse cx="541" cy="769" rx="3.0" ry="3.3" transform="rotate(39 541 769)"/><ellipse cx="584" cy="756" rx="2.1" ry="2.9" transform="rotate(128 584 756)"/><ellipse cx="226" cy="740" rx="1.8" ry="2.5" transform="rotate(89 226 740)"/><ellipse cx="300" cy="774" rx="3.6" ry="2.8" transform="rotate(146 300 774)"/><circle cx="267.4" cy="221.9" r="2.1"/><circle cx="274.1" cy="219.4" r="1.6"/><circle cx="131.6" cy="219.6" r="1.7"/><circle cx="440.0" cy="199.5" r="1.2"/><circle cx="84.0" cy="233.9" r="1.8"/><circle cx="59.2" cy="242.1" r="2.2"/><circle cx="369.5" cy="224.5" r="1.0"/><circle cx="45.6" cy="220.4" r="0.9"/><circle cx="134.4" cy="206.6" r="0.8"/><circle cx="273.2" cy="216.1" r="2.0"/><circle cx="301.2" cy="225.7" r="1.5"/><circle cx="373.9" cy="217.0" r="1.2"/><circle cx="543.8" cy="242.8" r="2.0"/><circle cx="396.9" cy="210.1" r="1.1"/><circle cx="184.5" cy="198.4" r="1.9"/><circle cx="241.0" cy="235.6" r="1.3"/><circle cx="523.7" cy="235.7" r="0.8"/><circle cx="144.3" cy="238.7" r="1.5"/><circle cx="535.0" cy="214.1" r="0.9"/><circle cx="357.1" cy="232.4" r="1.2"/><circle cx="82.2" cy="211.0" r="2.1"/><circle cx="422.3" cy="200.7" r="1.1"/><circle cx="89.2" cy="197.9" r="1.9"/><circle cx="128.1" cy="221.8" r="1.4"/><circle cx="134.7" cy="230.1" r="1.0"/><circle cx="364.4" cy="200.6" r="1.4"/><circle cx="145.9" cy="208.0" r="2.2"/><circle cx="445.3" cy="209.6" r="2.0"/><circle cx="144.8" cy="213.9" r="2.0"/><circle cx="363.4" cy="199.8" r="2.2"/><circle cx="146.1" cy="207.4" r="1.9"/><circle cx="204.8" cy="209.2" r="0.9"/><circle cx="83.7" cy="223.0" r="1.1"/><circle cx="342.9" cy="212.8" r="1.4"/><circle cx="524.3" cy="218.2" r="1.6"/><circle cx="477.3" cy="203.8" r="1.0"/><circle cx="498.6" cy="234.3" r="1.1"/><circle cx="134.2" cy="230.5" r="2.1"/><circle cx="137.7" cy="240.6" r="2.0"/><circle cx="344.0" cy="215.2" r="0.9"/><circle cx="57.6" cy="241.2" r="1.1"/><circle cx="395.2" cy="207.3" r="2.0"/><circle cx="340.4" cy="209.1" r="1.0"/><circle cx="403.2" cy="198.3" r="1.1"/><circle cx="321.6" cy="235.9" r="1.7"/><circle cx="180.1" cy="239.0" r="1.1"/><circle cx="46.4" cy="207.9" r="1.4"/><circle cx="68.7" cy="203.5" r="1.3"/><circle cx="328.1" cy="201.3" r="1.3"/><circle cx="489.7" cy="242.1" r="1.7"/><circle cx="388.4" cy="223.1" r="1.0"/><circle cx="55.8" cy="195.9" r="2.1"/><circle cx="393.4" cy="241.2" r="0.8"/><circle cx="360.5" cy="218.1" r="1.8"/><circle cx="199.7" cy="243.0" r="0.9"/><circle cx="314.9" cy="230.4" r="2.1"/><circle cx="411.7" cy="228.8" r="1.9"/><circle cx="501.9" cy="211.9" r="1.8"/><circle cx="494.7" cy="236.8" r="1.4"/><circle cx="438.8" cy="236.4" r="1.6"/><circle cx="354.9" cy="213.4" r="1.6"/><circle cx="346.7" cy="198.8" r="1.7"/><circle cx="541.6" cy="237.2" r="1.8"/><circle cx="234.9" cy="230.3" r="1.6"/><circle cx="261.3" cy="235.2" r="0.9"/><circle cx="418.4" cy="196.4" r="1.6"/><circle cx="281.8" cy="206.1" r="1.8"/><circle cx="290.1" cy="224.5" r="2.1"/><circle cx="167.7" cy="195.5" r="1.2"/><circle cx="381.8" cy="204.7" r="1.0"/><circle cx="497.2" cy="226.7" r="1.4"/><circle cx="490.1" cy="210.7" r="1.7"/><circle cx="138.6" cy="215.7" r="1.9"/><circle cx="501.5" cy="237.3" r="1.3"/><circle cx="333.6" cy="210.2" r="1.0"/><circle cx="289.7" cy="235.2" r="2.0"/><circle cx="398.6" cy="240.6" r="1.2"/><circle cx="123.7" cy="216.6" r="1.2"/><circle cx="146.5" cy="214.9" r="1.7"/><circle cx="288.4" cy="210.1" r="2.0"/><circle cx="535.9" cy="216.7" r="0.9"/><circle cx="54.0" cy="236.9" r="0.9"/><circle cx="397.3" cy="222.4" r="1.2"/><circle cx="439.3" cy="195.9" r="1.0"/><circle cx="268.6" cy="196.2" r="2.0"/><circle cx="158.4" cy="201.8" r="0.9"/><circle cx="357.0" cy="216.4" r="1.7"/><circle cx="370.1" cy="233.8" r="2.1"/><circle cx="385.0" cy="204.6" r="1.5"/><circle cx="128.6" cy="195.5" r="1.5"/><circle cx="400.1" cy="203.6" r="1.2"/><circle cx="213.3" cy="228.5" r="1.5"/><circle cx="349.5" cy="231.3" r="1.4"/><circle cx="439.5" cy="238.5" r="0.9"/><circle cx="510.8" cy="229.7" r="1.0"/><circle cx="267.9" cy="225.0" r="2.1"/><circle cx="229.0" cy="222.3" r="2.0"/><circle cx="442.0" cy="240.3" r="1.4"/><circle cx="368.2" cy="204.8" r="1.8"/><circle cx="452.9" cy="225.8" r="1.8"/><circle cx="146.1" cy="238.2" r="2.2"/><circle cx="533.5" cy="220.8" r="1.9"/><circle cx="200.4" cy="238.7" r="2.0"/><circle cx="214.7" cy="199.0" r="1.4"/><circle cx="317.0" cy="231.9" r="1.5"/><circle cx="52.4" cy="233.8" r="0.9"/><circle cx="443.5" cy="203.3" r="1.3"/><circle cx="437.5" cy="201.7" r="1.0"/><circle cx="299.9" cy="229.7" r="2.0"/><circle cx="387.5" cy="240.4" r="1.5"/><circle cx="519.2" cy="199.1" r="1.1"/><circle cx="305.0" cy="208.9" r="1.8"/><circle cx="361.9" cy="220.1" r="2.0"/><circle cx="321.9" cy="210.0" r="1.3"/><circle cx="466.5" cy="238.2" r="1.1"/><circle cx="469.3" cy="241.5" r="1.5"/><circle cx="328.5" cy="204.6" r="1.6"/><circle cx="293.1" cy="224.1" r="0.8"/><circle cx="529.5" cy="219.8" r="1.4"/><circle cx="444.1" cy="222.0" r="1.5"/><circle cx="388.3" cy="198.2" r="1.6"/><circle cx="247.8" cy="240.9" r="2.1"/><circle cx="174.5" cy="217.7" r="1.0"/><circle cx="257.9" cy="234.2" r="2.1"/><circle cx="279.6" cy="210.2" r="1.1"/><circle cx="351.3" cy="239.4" r="1.0"/><circle cx="433.1" cy="196.1" r="1.1"/><circle cx="153.2" cy="228.0" r="1.3"/><circle cx="218.2" cy="224.7" r="0.9"/><circle cx="408.6" cy="200.9" r="1.5"/><circle cx="165.0" cy="204.5" r="1.5"/><circle cx="259.4" cy="213.0" r="1.4"/><circle cx="306.4" cy="202.7" r="1.1"/><circle cx="358.1" cy="225.6" r="1.5"/><circle cx="469.6" cy="224.4" r="2.0"/><circle cx="156.0" cy="230.6" r="1.9"/><circle cx="495.7" cy="210.2" r="1.2"/><circle cx="505.8" cy="205.5" r="2.2"/><circle cx="488.0" cy="201.4" r="1.1"/><circle cx="406.4" cy="207.5" r="0.9"/><circle cx="459.9" cy="215.2" r="1.9"/><circle cx="101.9" cy="214.3" r="1.8"/><circle cx="47.0" cy="204.6" r="1.8"/><circle cx="500.1" cy="241.5" r="1.0"/><circle cx="294.4" cy="231.4" r="1.5"/><circle cx="385.6" cy="204.1" r="0.9"/><circle cx="91.8" cy="196.8" r="1.6"/><circle cx="299.0" cy="222.3" r="1.0"/><circle cx="131.6" cy="204.8" r="2.0"/><circle cx="540.1" cy="239.5" r="0.9"/><circle cx="69.4" cy="240.7" r="1.4"/><circle cx="425.7" cy="210.7" r="1.5"/><circle cx="299.3" cy="215.6" r="1.6"/><circle cx="44.7" cy="228.6" r="2.0"/><circle cx="129.9" cy="216.8" r="1.8"/><circle cx="243.5" cy="204.4" r="1.0"/><circle cx="297.9" cy="195.7" r="2.1"/><circle cx="444.5" cy="228.8" r="2.0"/><circle cx="357.1" cy="214.4" r="1.6"/><circle cx="293.7" cy="242.2" r="1.9"/><circle cx="168.9" cy="238.7" r="1.8"/><circle cx="432.4" cy="234.1" r="1.4"/><circle cx="492.5" cy="237.2" r="1.8"/><circle cx="427.0" cy="231.7" r="1.4"/><circle cx="404.4" cy="198.4" r="1.3"/><circle cx="275.7" cy="195.5" r="1.3"/><circle cx="361.8" cy="225.0" r="1.1"/><circle cx="517.0" cy="227.0" r="1.3"/><circle cx="372.5" cy="222.3" r="1.5"/><circle cx="235.5" cy="243.0" r="1.7"/><circle cx="393.5" cy="231.6" r="2.2"/><circle cx="49.6" cy="224.5" r="1.8"/><circle cx="168.1" cy="214.3" r="0.9"/><circle cx="137.1" cy="213.0" r="0.9"/><circle cx="165.2" cy="238.5" r="1.6"/><circle cx="295.5" cy="241.4" r="1.6"/><circle cx="542.5" cy="225.6" r="1.9"/><circle cx="76.6" cy="223.7" r="1.9"/><circle cx="60.9" cy="239.6" r="1.0"/><circle cx="277.2" cy="203.1" r="1.5"/><circle cx="347.9" cy="197.8" r="2.1"/><circle cx="251.3" cy="220.3" r="1.6"/><circle cx="223.3" cy="208.7" r="1.7"/><circle cx="322.2" cy="208.6" r="1.8"/><circle cx="188.1" cy="195.7" r="1.1"/><circle cx="59.7" cy="202.5" r="1.9"/><circle cx="235.7" cy="238.1" r="1.8"/><circle cx="63.4" cy="242.5" r="2.1"/><circle cx="75.3" cy="238.5" r="1.4"/><circle cx="280.1" cy="241.7" r="1.1"/><circle cx="303.3" cy="240.0" r="1.8"/><circle cx="275.5" cy="242.0" r="1.9"/><circle cx="344.0" cy="200.5" r="1.7"/><circle cx="269.0" cy="204.8" r="0.9"/><circle cx="305.7" cy="201.0" r="1.4"/><circle cx="376.6" cy="216.9" r="1.2"/><circle cx="333.2" cy="215.1" r="1.9"/><circle cx="307.1" cy="242.9" r="2.1"/><circle cx="410.3" cy="206.4" r="1.0"/><circle cx="490.6" cy="232.6" r="1.7"/><circle cx="220.1" cy="208.0" r="1.8"/><circle cx="324.4" cy="223.4" r="1.7"/><circle cx="419.9" cy="204.1" r="1.1"/><circle cx="534.7" cy="239.0" r="2.0"/><circle cx="58.0" cy="197.9" r="1.2"/><circle cx="253.6" cy="224.9" r="0.9"/><circle cx="312.6" cy="198.5" r="0.9"/><circle cx="380.9" cy="221.4" r="1.7"/><circle cx="227.2" cy="218.0" r="1.1"/><circle cx="212.3" cy="230.8" r="2.0"/><circle cx="75.7" cy="200.7" r="1.9"/><circle cx="354.2" cy="231.9" r="1.1"/><circle cx="253.2" cy="207.4" r="1.9"/><circle cx="225.1" cy="226.4" r="2.2"/><circle cx="203.0" cy="221.3" r="1.8"/><circle cx="504.9" cy="215.5" r="1.3"/><circle cx="87.2" cy="237.0" r="0.9"/><circle cx="80.1" cy="222.1" r="1.5"/><circle cx="385.5" cy="209.3" r="1.9"/><circle cx="76.6" cy="205.2" r="1.7"/><circle cx="79.4" cy="209.6" r="1.8"/><circle cx="389.8" cy="208.6" r="1.0"/><circle cx="219.4" cy="229.8" r="1.3"/><circle cx="97.5" cy="229.0" r="1.6"/><circle cx="503.7" cy="240.1" r="2.1"/><circle cx="260.1" cy="233.5" r="1.2"/><circle cx="199.0" cy="214.2" r="2.1"/><circle cx="491.6" cy="206.9" r="1.3"/><circle cx="223.3" cy="212.4" r="1.4"/><circle cx="234.5" cy="204.4" r="1.6"/><circle cx="442.1" cy="220.9" r="2.0"/><circle cx="323.3" cy="203.5" r="1.9"/><circle cx="484.6" cy="208.5" r="0.8"/><circle cx="299.4" cy="221.1" r="1.6"/><circle cx="528.0" cy="226.3" r="1.9"/><circle cx="70.5" cy="221.2" r="1.9"/><circle cx="80.6" cy="198.9" r="1.8"/><circle cx="493.8" cy="199.1" r="1.7"/><circle cx="110.9" cy="230.8" r="1.7"/><circle cx="162.4" cy="205.6" r="1.9"/><circle cx="302.4" cy="231.7" r="1.4"/><circle cx="209.3" cy="241.5" r="1.7"/><circle cx="288.3" cy="220.8" r="1.8"/><circle cx="397.0" cy="238.9" r="1.4"/><circle cx="456.9" cy="227.0" r="2.0"/><circle cx="446.6" cy="235.0" r="2.0"/><circle cx="523.6" cy="225.7" r="1.5"/><circle cx="398.0" cy="233.5" r="1.4"/><circle cx="251.2" cy="202.0" r="1.8"/><circle cx="540.4" cy="213.0" r="1.0"/><circle cx="141.6" cy="215.4" r="1.2"/><circle cx="529.7" cy="197.8" r="1.2"/><circle cx="96.2" cy="226.1" r="1.9"/><circle cx="129.0" cy="198.0" r="1.4"/><circle cx="334.1" cy="238.6" r="0.9"/><circle cx="93.1" cy="203.9" r="1.1"/><circle cx="157.4" cy="229.4" r="1.6"/><circle cx="151.5" cy="203.9" r="1.2"/><circle cx="125.5" cy="231.4" r="1.2"/><circle cx="316.0" cy="234.2" r="1.5"/><circle cx="280.7" cy="533.0" r="2.1"/><circle cx="306.0" cy="451.4" r="2.1"/><circle cx="349.6" cy="373.0" r="0.9"/><circle cx="493.7" cy="512.3" r="1.3"/><circle cx="363.6" cy="443.8" r="1.2"/><circle cx="507.0" cy="477.8" r="1.1"/><circle cx="203.4" cy="433.4" r="1.3"/><circle cx="447.0" cy="491.2" r="1.6"/><circle cx="248.8" cy="357.7" r="1.3"/><circle cx="280.4" cy="528.6" r="1.5"/><circle cx="397.5" cy="558.3" r="1.2"/><circle cx="365.7" cy="356.2" r="1.9"/><circle cx="200.4" cy="517.1" r="2.0"/><circle cx="454.8" cy="339.8" r="1.2"/><circle cx="422.1" cy="343.3" r="1.5"/><circle cx="345.3" cy="549.3" r="1.6"/><circle cx="465.8" cy="392.9" r="1.9"/><circle cx="329.3" cy="540.0" r="0.9"/><circle cx="456.2" cy="370.0" r="1.6"/><circle cx="363.0" cy="357.8" r="2.0"/><circle cx="296.5" cy="394.6" r="0.9"/><circle cx="294.8" cy="432.1" r="1.8"/><circle cx="311.5" cy="484.9" r="0.9"/><circle cx="322.2" cy="430.8" r="2.2"/><circle cx="457.2" cy="476.9" r="0.8"/><circle cx="316.9" cy="490.4" r="1.1"/><circle cx="374.9" cy="429.9" r="0.8"/><circle cx="507.4" cy="511.9" r="1.1"/><circle cx="391.0" cy="389.7" r="1.3"/><circle cx="367.3" cy="391.6" r="1.3"/><circle cx="321.6" cy="480.0" r="1.2"/><circle cx="262.0" cy="495.5" r="1.3"/><circle cx="493.0" cy="455.1" r="1.8"/><circle cx="302.8" cy="518.5" r="0.9"/><circle cx="243.7" cy="342.7" r="1.7"/><circle cx="419.6" cy="363.2" r="1.4"/><circle cx="459.4" cy="462.3" r="0.9"/><circle cx="270.2" cy="357.7" r="1.0"/><circle cx="326.1" cy="337.4" r="2.1"/><circle cx="332.4" cy="442.8" r="1.7"/><circle cx="437.7" cy="517.1" r="1.3"/><circle cx="302.7" cy="418.9" r="0.8"/><circle cx="324.2" cy="488.0" r="2.2"/><circle cx="444.8" cy="478.5" r="1.7"/><circle cx="205.7" cy="399.4" r="1.3"/><circle cx="401.7" cy="345.5" r="1.3"/><circle cx="357.9" cy="509.3" r="2.0"/><circle cx="389.5" cy="358.0" r="1.9"/><circle cx="479.9" cy="451.6" r="1.3"/><circle cx="355.1" cy="354.0" r="1.8"/><circle cx="505.9" cy="443.8" r="1.8"/><circle cx="459.0" cy="367.3" r="2.1"/><circle cx="394.4" cy="367.5" r="0.9"/><circle cx="275.8" cy="458.4" r="1.8"/><circle cx="302.0" cy="543.0" r="1.3"/><circle cx="343.5" cy="349.8" r="2.2"/><circle cx="242.0" cy="537.0" r="1.6"/><circle cx="373.8" cy="454.5" r="1.2"/><circle cx="481.9" cy="558.1" r="1.9"/><circle cx="386.5" cy="349.4" r="2.0"/><circle cx="289.5" cy="535.3" r="1.1"/><circle cx="377.8" cy="519.4" r="1.1"/><circle cx="369.8" cy="338.3" r="0.8"/><circle cx="255.8" cy="556.9" r="2.1"/><circle cx="404.1" cy="393.8" r="1.7"/><circle cx="428.7" cy="411.6" r="1.6"/><circle cx="449.2" cy="323.9" r="1.1"/><circle cx="345.1" cy="354.3" r="1.3"/><circle cx="376.6" cy="361.7" r="1.5"/><circle cx="281.7" cy="456.3" r="1.3"/><circle cx="398.9" cy="329.1" r="1.7"/><circle cx="244.9" cy="550.2" r="1.6"/><circle cx="345.7" cy="418.7" r="1.7"/><circle cx="413.7" cy="501.9" r="1.9"/><circle cx="350.6" cy="558.7" r="2.0"/><circle cx="465.1" cy="418.2" r="1.4"/><circle cx="375.4" cy="537.3" r="1.5"/><circle cx="362.8" cy="423.7" r="2.1"/><circle cx="299.4" cy="333.1" r="1.8"/><circle cx="479.0" cy="495.7" r="1.6"/><circle cx="433.1" cy="393.1" r="1.6"/><circle cx="221.6" cy="349.9" r="1.4"/><circle cx="355.8" cy="415.2" r="0.9"/><circle cx="415.4" cy="446.3" r="1.1"/><circle cx="295.0" cy="414.9" r="1.1"/><circle cx="221.2" cy="538.7" r="2.2"/><circle cx="406.4" cy="528.0" r="1.4"/><circle cx="449.6" cy="373.2" r="1.8"/><circle cx="375.7" cy="536.8" r="0.9"/><circle cx="445.6" cy="349.7" r="1.6"/><circle cx="494.8" cy="320.1" r="1.1"/><circle cx="292.8" cy="397.9" r="0.9"/><circle cx="477.5" cy="515.7" r="1.4"/><circle cx="310.5" cy="460.5" r="0.9"/><circle cx="209.7" cy="535.6" r="1.2"/><circle cx="354.5" cy="544.1" r="2.2"/><circle cx="346.5" cy="369.6" r="1.2"/><circle cx="486.0" cy="535.2" r="1.1"/><circle cx="459.8" cy="405.0" r="1.5"/><circle cx="253.3" cy="531.1" r="2.2"/><circle cx="262.6" cy="471.8" r="1.1"/><circle cx="472.9" cy="332.0" r="0.9"/><circle cx="425.0" cy="395.1" r="2.1"/><circle cx="469.6" cy="491.2" r="1.0"/><circle cx="415.7" cy="545.1" r="1.4"/><circle cx="224.5" cy="373.6" r="1.2"/><circle cx="420.3" cy="367.2" r="1.1"/><circle cx="273.0" cy="479.5" r="1.9"/><circle cx="315.5" cy="478.9" r="2.0"/><circle cx="382.9" cy="375.0" r="1.2"/><circle cx="487.3" cy="480.1" r="1.2"/><circle cx="398.4" cy="341.6" r="2.2"/><circle cx="336.5" cy="446.8" r="1.5"/><circle cx="214.1" cy="463.9" r="1.2"/><circle cx="277.8" cy="512.8" r="0.9"/><circle cx="288.4" cy="501.4" r="1.1"/><circle cx="286.5" cy="451.5" r="1.1"/><circle cx="478.1" cy="557.1" r="0.8"/><circle cx="343.1" cy="500.1" r="1.3"/><circle cx="488.1" cy="440.0" r="1.1"/><circle cx="372.4" cy="474.8" r="1.3"/><circle cx="404.1" cy="507.9" r="1.5"/><circle cx="356.7" cy="522.9" r="1.8"/><circle cx="361.4" cy="548.4" r="1.0"/><circle cx="441.7" cy="359.6" r="1.7"/><circle cx="273.0" cy="425.7" r="1.9"/><circle cx="443.8" cy="509.9" r="1.1"/><circle cx="351.6" cy="373.1" r="1.6"/><circle cx="354.7" cy="328.5" r="1.6"/><circle cx="421.6" cy="457.4" r="2.0"/><circle cx="255.8" cy="356.4" r="0.8"/><circle cx="353.8" cy="424.3" r="1.4"/><circle cx="281.5" cy="511.6" r="0.9"/><circle cx="481.3" cy="456.5" r="1.6"/><circle cx="445.4" cy="377.1" r="1.0"/><circle cx="296.4" cy="330.2" r="1.2"/><circle cx="392.6" cy="446.1" r="1.2"/><circle cx="382.5" cy="341.2" r="1.9"/><circle cx="253.2" cy="381.2" r="1.0"/><circle cx="414.1" cy="519.4" r="1.9"/><circle cx="219.0" cy="418.6" r="1.3"/><circle cx="267.1" cy="552.9" r="0.9"/><circle cx="351.8" cy="502.7" r="2.2"/><circle cx="244.8" cy="429.3" r="1.8"/><circle cx="212.2" cy="377.7" r="2.0"/><circle cx="243.9" cy="414.3" r="1.2"/><circle cx="331.6" cy="338.4" r="0.8"/><circle cx="508.8" cy="503.2" r="1.8"/><circle cx="271.3" cy="380.8" r="1.6"/><circle cx="274.9" cy="430.8" r="2.1"/><circle cx="312.8" cy="400.9" r="2.2"/><circle cx="389.4" cy="329.5" r="1.4"/><circle cx="401.4" cy="334.0" r="1.3"/><circle cx="415.4" cy="527.5" r="1.6"/><circle cx="474.8" cy="431.0" r="1.4"/><circle cx="461.3" cy="411.5" r="1.9"/><circle cx="266.8" cy="403.4" r="1.1"/><circle cx="370.4" cy="359.3" r="1.1"/><circle cx="266.5" cy="432.3" r="1.2"/><circle cx="338.6" cy="558.4" r="1.8"/><circle cx="467.4" cy="369.1" r="1.3"/><circle cx="222.6" cy="485.9" r="1.3"/><circle cx="285.1" cy="324.5" r="1.1"/><circle cx="281.3" cy="414.3" r="2.1"/><circle cx="421.7" cy="384.5" r="1.3"/><circle cx="247.6" cy="544.8" r="1.3"/><circle cx="437.4" cy="493.6" r="2.1"/><circle cx="206.3" cy="397.3" r="1.3"/><circle cx="225.8" cy="531.8" r="1.3"/><circle cx="438.9" cy="444.6" r="0.9"/><circle cx="322.1" cy="377.2" r="0.9"/><circle cx="246.8" cy="462.9" r="0.8"/><circle cx="296.8" cy="421.8" r="1.6"/><circle cx="242.2" cy="489.6" r="1.2"/><circle cx="424.9" cy="479.9" r="1.0"/><circle cx="263.5" cy="387.3" r="1.8"/><circle cx="325.6" cy="412.8" r="2.0"/><circle cx="270.1" cy="390.1" r="1.3"/><circle cx="266.9" cy="329.8" r="0.8"/><circle cx="395.4" cy="455.8" r="1.9"/><circle cx="502.4" cy="391.5" r="1.7"/><circle cx="484.9" cy="371.9" r="1.8"/><circle cx="406.6" cy="549.2" r="2.0"/><circle cx="272.7" cy="471.8" r="0.9"/><circle cx="332.6" cy="414.2" r="0.9"/><circle cx="318.8" cy="398.8" r="1.5"/><circle cx="286.7" cy="358.1" r="1.4"/><circle cx="347.3" cy="360.0" r="1.7"/><circle cx="274.3" cy="342.3" r="1.3"/><circle cx="330.9" cy="356.2" r="1.6"/><circle cx="417.4" cy="452.8" r="1.8"/><circle cx="207.1" cy="413.9" r="1.3"/><circle cx="219.5" cy="417.0" r="0.9"/><circle cx="353.6" cy="460.6" r="1.5"/><circle cx="300.9" cy="380.8" r="0.8"/><circle cx="307.6" cy="534.0" r="1.6"/><circle cx="281.2" cy="480.3" r="1.1"/><circle cx="345.5" cy="467.7" r="2.1"/><circle cx="312.4" cy="458.3" r="2.1"/><circle cx="439.2" cy="470.6" r="1.7"/><circle cx="327.4" cy="419.7" r="1.2"/><circle cx="457.2" cy="531.1" r="1.3"/><circle cx="482.0" cy="329.2" r="1.0"/><circle cx="357.2" cy="394.1" r="1.3"/><circle cx="502.9" cy="356.0" r="1.1"/><circle cx="270.8" cy="483.2" r="1.1"/><circle cx="200.3" cy="450.5" r="1.4"/><circle cx="274.2" cy="438.5" r="1.7"/><circle cx="369.9" cy="469.9" r="1.6"/><circle cx="457.6" cy="552.5" r="1.3"/><circle cx="307.5" cy="532.7" r="1.2"/><circle cx="421.9" cy="486.9" r="1.8"/><circle cx="498.8" cy="517.9" r="1.0"/><circle cx="392.7" cy="437.8" r="1.6"/><circle cx="314.6" cy="388.6" r="1.8"/><circle cx="365.5" cy="376.9" r="1.1"/><circle cx="300.7" cy="362.7" r="1.5"/><circle cx="239.1" cy="335.2" r="0.9"/><circle cx="231.7" cy="489.1" r="1.0"/><circle cx="340.0" cy="505.3" r="1.5"/><circle cx="890.0" cy="745.1" r="2.0"/><circle cx="876.6" cy="402.2" r="1.5"/><circle cx="968.0" cy="479.7" r="1.8"/><circle cx="901.0" cy="660.8" r="1.3"/><circle cx="911.1" cy="685.2" r="2.0"/><circle cx="971.9" cy="577.8" r="1.4"/><circle cx="957.0" cy="608.9" r="2.0"/><circle cx="968.6" cy="330.1" r="1.3"/><circle cx="952.3" cy="389.4" r="1.1"/><circle cx="871.7" cy="587.9" r="2.1"/><circle cx="989.4" cy="334.9" r="1.8"/><circle cx="921.6" cy="613.6" r="1.4"/><circle cx="984.8" cy="813.7" r="0.9"/><circle cx="957.7" cy="326.3" r="0.9"/><circle cx="905.2" cy="669.5" r="2.2"/><circle cx="884.8" cy="444.8" r="0.8"/><circle cx="936.7" cy="530.5" r="1.3"/><circle cx="908.0" cy="708.3" r="2.0"/><circle cx="904.9" cy="479.3" r="1.7"/><circle cx="964.1" cy="809.3" r="1.3"/><circle cx="955.4" cy="565.7" r="1.9"/><circle cx="888.1" cy="358.0" r="0.9"/><circle cx="984.8" cy="400.8" r="1.5"/><circle cx="884.8" cy="441.2" r="0.8"/><circle cx="939.6" cy="340.4" r="1.7"/><circle cx="903.7" cy="387.4" r="1.5"/><circle cx="915.0" cy="405.4" r="0.9"/><circle cx="877.9" cy="759.9" r="1.2"/><circle cx="879.6" cy="362.2" r="1.5"/><circle cx="992.7" cy="373.2" r="2.0"/><circle cx="929.6" cy="492.2" r="1.9"/><circle cx="918.7" cy="292.3" r="1.6"/><circle cx="950.8" cy="608.9" r="1.2"/><circle cx="985.5" cy="744.2" r="2.2"/><circle cx="924.5" cy="726.9" r="1.8"/><circle cx="891.6" cy="275.0" r="1.0"/><circle cx="884.6" cy="301.8" r="1.3"/><circle cx="962.7" cy="433.6" r="1.5"/><circle cx="871.3" cy="377.7" r="2.1"/><circle cx="871.4" cy="555.3" r="1.9"/><circle cx="967.5" cy="671.8" r="1.4"/><circle cx="968.8" cy="723.5" r="1.9"/><circle cx="991.3" cy="316.5" r="2.1"/><circle cx="919.5" cy="654.9" r="1.2"/><circle cx="981.9" cy="273.2" r="1.6"/><circle cx="897.9" cy="477.5" r="1.3"/><circle cx="950.8" cy="714.0" r="1.3"/><circle cx="948.5" cy="458.3" r="1.2"/><circle cx="981.3" cy="440.1" r="0.9"/><circle cx="911.2" cy="675.3" r="1.1"/><circle cx="961.4" cy="565.9" r="1.8"/><circle cx="891.8" cy="319.3" r="1.0"/><circle cx="913.1" cy="501.2" r="0.8"/><circle cx="931.8" cy="485.9" r="1.3"/><circle cx="936.1" cy="793.3" r="1.1"/><circle cx="978.3" cy="439.7" r="1.9"/><circle cx="883.3" cy="813.0" r="1.4"/><circle cx="988.4" cy="383.0" r="1.4"/><circle cx="956.8" cy="359.6" r="1.2"/><circle cx="953.3" cy="790.7" r="1.3"/><circle cx="892.6" cy="460.0" r="2.2"/><circle cx="888.2" cy="615.4" r="1.3"/><circle cx="949.2" cy="378.9" r="1.7"/><circle cx="979.2" cy="739.6" r="1.7"/><circle cx="932.1" cy="577.9" r="1.0"/><circle cx="973.0" cy="646.3" r="1.4"/><circle cx="951.9" cy="494.8" r="1.3"/><circle cx="898.3" cy="596.4" r="1.6"/><circle cx="933.4" cy="278.0" r="1.7"/><circle cx="925.0" cy="592.3" r="1.6"/><circle cx="984.6" cy="345.1" r="1.5"/><circle cx="992.1" cy="673.3" r="1.2"/><circle cx="960.6" cy="814.1" r="1.4"/><circle cx="976.7" cy="330.9" r="2.2"/><circle cx="930.4" cy="391.1" r="2.0"/><circle cx="949.9" cy="785.1" r="2.0"/><circle cx="968.1" cy="546.5" r="2.2"/><circle cx="878.0" cy="747.3" r="1.8"/><circle cx="900.8" cy="712.0" r="1.4"/><circle cx="936.0" cy="744.7" r="1.1"/><circle cx="904.4" cy="620.5" r="0.9"/><circle cx="938.3" cy="700.8" r="1.5"/><circle cx="899.7" cy="708.0" r="2.0"/><circle cx="964.8" cy="567.6" r="2.1"/><circle cx="968.0" cy="345.0" r="1.3"/><circle cx="882.3" cy="280.6" r="1.3"/><circle cx="976.4" cy="727.0" r="1.0"/><circle cx="892.3" cy="477.6" r="2.0"/><circle cx="945.9" cy="765.0" r="0.9"/><circle cx="991.5" cy="375.8" r="1.7"/><circle cx="977.8" cy="667.5" r="1.1"/><circle cx="952.2" cy="501.2" r="0.8"/><circle cx="911.8" cy="436.6" r="1.7"/><circle cx="904.3" cy="597.7" r="1.8"/><circle cx="892.2" cy="331.7" r="1.8"/><circle cx="927.4" cy="332.3" r="1.0"/><circle cx="985.7" cy="601.6" r="1.3"/><circle cx="894.1" cy="817.1" r="1.8"/><circle cx="960.6" cy="461.8" r="1.2"/><circle cx="920.2" cy="341.9" r="1.7"/><circle cx="922.2" cy="719.3" r="1.4"/><circle cx="926.2" cy="543.6" r="2.1"/><circle cx="912.6" cy="654.0" r="1.1"/><circle cx="941.3" cy="419.5" r="2.0"/><circle cx="905.2" cy="738.5" r="1.7"/><circle cx="926.0" cy="782.9" r="1.3"/><circle cx="961.4" cy="596.7" r="1.4"/><circle cx="877.9" cy="494.7" r="1.2"/><circle cx="924.2" cy="794.5" r="1.2"/><circle cx="955.5" cy="636.4" r="1.1"/><circle cx="920.6" cy="334.0" r="2.1"/><circle cx="901.0" cy="495.6" r="1.3"/><circle cx="970.9" cy="736.2" r="1.6"/><circle cx="937.1" cy="315.7" r="2.1"/><circle cx="880.9" cy="463.6" r="1.3"/><circle cx="958.9" cy="634.7" r="1.3"/><circle cx="980.4" cy="791.8" r="0.8"/><circle cx="947.9" cy="522.7" r="1.3"/><circle cx="927.2" cy="437.0" r="1.7"/><circle cx="944.5" cy="803.4" r="2.2"/><circle cx="992.1" cy="481.3" r="2.0"/><circle cx="949.9" cy="652.6" r="2.2"/><circle cx="878.2" cy="518.8" r="1.4"/><circle cx="950.7" cy="382.1" r="2.2"/><circle cx="895.8" cy="467.1" r="1.0"/><circle cx="918.5" cy="675.4" r="0.9"/><circle cx="890.5" cy="623.4" r="1.7"/><circle cx="961.3" cy="401.9" r="1.9"/><circle cx="959.9" cy="694.6" r="1.0"/><circle cx="927.6" cy="268.8" r="2.0"/><circle cx="986.2" cy="761.7" r="0.8"/><circle cx="913.2" cy="560.1" r="1.5"/><circle cx="883.7" cy="702.0" r="1.2"/><circle cx="932.4" cy="329.8" r="1.6"/><circle cx="886.0" cy="309.5" r="1.5"/><circle cx="906.2" cy="695.4" r="1.1"/><circle cx="920.9" cy="290.4" r="1.1"/><circle cx="925.6" cy="572.5" r="1.4"/><circle cx="974.6" cy="318.4" r="2.0"/><circle cx="889.0" cy="803.4" r="1.5"/><circle cx="920.0" cy="602.8" r="2.0"/><circle cx="988.5" cy="491.5" r="0.8"/><circle cx="888.9" cy="718.3" r="1.8"/><circle cx="957.7" cy="347.7" r="1.5"/><circle cx="873.5" cy="321.7" r="1.2"/><circle cx="988.8" cy="620.1" r="2.0"/><circle cx="875.7" cy="493.0" r="0.9"/><circle cx="902.1" cy="322.6" r="2.1"/><circle cx="910.4" cy="533.8" r="1.7"/><circle cx="979.1" cy="790.0" r="1.6"/><circle cx="931.6" cy="766.2" r="1.4"/><circle cx="906.8" cy="674.0" r="1.2"/><circle cx="915.2" cy="500.4" r="1.5"/><circle cx="914.1" cy="501.1" r="1.4"/><circle cx="876.1" cy="728.0" r="0.9"/><circle cx="934.9" cy="566.6" r="1.4"/><circle cx="897.4" cy="315.5" r="1.3"/><circle cx="908.7" cy="531.0" r="1.1"/><circle cx="962.2" cy="532.9" r="0.8"/><circle cx="920.0" cy="801.1" r="0.8"/><circle cx="703.9" cy="710.6" r="1.3"/><circle cx="705.4" cy="568.5" r="1.2"/><circle cx="708.9" cy="621.5" r="1.2"/><circle cx="674.3" cy="603.9" r="1.9"/><circle cx="536.4" cy="502.3" r="1.2"/><circle cx="603.7" cy="671.0" r="1.4"/><circle cx="786.6" cy="576.5" r="1.2"/><circle cx="730.8" cy="500.5" r="2.2"/><circle cx="777.8" cy="558.8" r="1.2"/><circle cx="774.0" cy="669.2" r="1.7"/><circle cx="537.6" cy="663.3" r="0.9"/><circle cx="713.7" cy="612.5" r="2.1"/><circle cx="718.0" cy="485.4" r="2.1"/><circle cx="753.3" cy="619.2" r="0.8"/><circle cx="748.4" cy="580.4" r="1.8"/><circle cx="824.9" cy="700.0" r="0.9"/><circle cx="762.2" cy="585.7" r="1.9"/><circle cx="637.1" cy="587.4" r="1.4"/><circle cx="556.6" cy="556.8" r="1.8"/><circle cx="542.1" cy="507.8" r="2.0"/><circle cx="726.5" cy="611.5" r="1.0"/><circle cx="556.7" cy="554.4" r="2.1"/><circle cx="693.7" cy="701.3" r="1.1"/><circle cx="648.6" cy="608.7" r="2.0"/><circle cx="558.2" cy="689.7" r="1.5"/><circle cx="529.7" cy="583.7" r="1.3"/><circle cx="729.1" cy="702.8" r="1.5"/><circle cx="733.8" cy="573.1" r="1.9"/><circle cx="552.6" cy="658.2" r="1.0"/><circle cx="701.6" cy="528.5" r="1.3"/><circle cx="570.8" cy="563.9" r="1.6"/><circle cx="681.2" cy="573.3" r="1.6"/><circle cx="781.1" cy="566.0" r="1.6"/><circle cx="668.9" cy="715.3" r="1.3"/><circle cx="736.2" cy="536.1" r="1.2"/><circle cx="746.4" cy="618.0" r="1.2"/><circle cx="539.9" cy="678.0" r="1.3"/><circle cx="742.1" cy="583.9" r="1.7"/><circle cx="693.5" cy="714.2" r="2.1"/><circle cx="661.3" cy="596.8" r="1.1"/><circle cx="753.5" cy="504.6" r="1.2"/><circle cx="782.7" cy="488.4" r="1.8"/><circle cx="696.1" cy="612.4" r="1.3"/><circle cx="567.0" cy="708.2" r="1.9"/><circle cx="769.8" cy="503.4" r="1.9"/><circle cx="587.7" cy="527.8" r="1.5"/><circle cx="709.0" cy="509.0" r="1.9"/><circle cx="700.6" cy="695.9" r="2.1"/><circle cx="733.7" cy="567.4" r="2.1"/><circle cx="742.8" cy="549.8" r="2.0"/><circle cx="745.3" cy="543.5" r="1.1"/><circle cx="526.3" cy="608.9" r="1.2"/><circle cx="610.8" cy="540.7" r="1.0"/><circle cx="670.3" cy="545.4" r="1.2"/><circle cx="606.1" cy="602.2" r="2.0"/><circle cx="569.6" cy="686.3" r="2.0"/><circle cx="708.9" cy="610.5" r="1.8"/><circle cx="685.7" cy="638.4" r="2.1"/><circle cx="760.3" cy="542.4" r="0.9"/><circle cx="810.4" cy="567.0" r="1.9"/><circle cx="592.4" cy="588.7" r="1.3"/><circle cx="746.1" cy="706.5" r="1.5"/><circle cx="695.5" cy="563.7" r="1.1"/><circle cx="814.5" cy="506.5" r="2.1"/><circle cx="723.7" cy="497.2" r="2.1"/><circle cx="551.6" cy="615.7" r="1.0"/><circle cx="826.5" cy="554.2" r="2.0"/><circle cx="539.0" cy="639.9" r="0.9"/><circle cx="529.2" cy="617.0" r="2.2"/><circle cx="732.4" cy="685.3" r="1.9"/><circle cx="681.6" cy="498.5" r="1.5"/><circle cx="577.2" cy="606.4" r="1.3"/><circle cx="674.7" cy="527.4" r="1.8"/><circle cx="649.4" cy="596.6" r="0.9"/><circle cx="671.0" cy="613.8" r="2.2"/><circle cx="694.1" cy="512.4" r="1.2"/><circle cx="624.0" cy="648.5" r="2.1"/><circle cx="822.6" cy="708.0" r="2.1"/><circle cx="786.2" cy="704.4" r="0.8"/><circle cx="671.8" cy="621.8" r="1.8"/><circle cx="709.9" cy="627.2" r="2.1"/><circle cx="546.8" cy="604.6" r="2.1"/><circle cx="529.9" cy="506.8" r="2.0"/><circle cx="816.7" cy="485.8" r="0.8"/><circle cx="777.2" cy="645.2" r="1.5"/><circle cx="699.8" cy="661.8" r="1.9"/><circle cx="520.2" cy="496.3" r="1.9"/><circle cx="822.4" cy="680.0" r="1.4"/><circle cx="624.0" cy="563.2" r="0.8"/><circle cx="758.8" cy="542.9" r="1.6"/><circle cx="123.2" cy="400.5" r="1.7"/><circle cx="111.7" cy="376.3" r="2.0"/><circle cx="66.5" cy="356.0" r="1.2"/><circle cx="115.6" cy="508.1" r="1.3"/><circle cx="76.6" cy="477.0" r="1.2"/><circle cx="122.7" cy="381.2" r="2.0"/><circle cx="67.9" cy="375.7" r="1.2"/><circle cx="91.4" cy="494.3" r="1.7"/><circle cx="166.0" cy="449.6" r="0.9"/><circle cx="161.7" cy="378.7" r="1.1"/><circle cx="105.1" cy="557.6" r="1.3"/><circle cx="95.7" cy="538.6" r="2.2"/><circle cx="100.7" cy="352.5" r="1.9"/><circle cx="164.7" cy="401.2" r="1.9"/><circle cx="99.5" cy="388.9" r="1.6"/><circle cx="158.1" cy="434.2" r="1.9"/><circle cx="40.2" cy="439.8" r="1.3"/><circle cx="48.5" cy="539.5" r="1.0"/><circle cx="71.3" cy="530.8" r="2.1"/><circle cx="188.9" cy="402.1" r="2.1"/><circle cx="61.0" cy="491.5" r="2.1"/><circle cx="69.2" cy="352.6" r="1.7"/><circle cx="181.0" cy="494.4" r="2.1"/><circle cx="111.5" cy="409.4" r="1.0"/><circle cx="82.2" cy="545.3" r="0.9"/><circle cx="67.9" cy="403.4" r="0.9"/><circle cx="87.7" cy="363.9" r="1.0"/><circle cx="123.4" cy="449.7" r="1.6"/><circle cx="161.5" cy="446.4" r="2.1"/><circle cx="51.2" cy="373.5" r="0.9"/><circle cx="88.1" cy="502.6" r="2.1"/><circle cx="119.6" cy="358.5" r="1.3"/><circle cx="130.1" cy="390.7" r="1.9"/><circle cx="195.6" cy="430.3" r="1.6"/><circle cx="175.1" cy="431.6" r="1.1"/><circle cx="190.9" cy="554.7" r="0.8"/><circle cx="161.6" cy="416.1" r="0.9"/><circle cx="64.4" cy="361.5" r="1.8"/><circle cx="72.3" cy="324.7" r="1.1"/><circle cx="167.5" cy="439.8" r="1.7"/></g>
<g fill="none" stroke="#b3d3de" stroke-width="3" stroke-linecap="round"><path d="M899,871 L912,856 L924,840.5 L940,832 L955,825 L972,808 L991.7,790.5"/></g>
<g font-family="Liberation Sans" paint-order="stroke" stroke="#fff" stroke-width="3" stroke-opacity="0.85"><text x="316" y="219.7" font-size="21" fill="#80628a" letter-spacing="0.1">Canada</text><text x="875" y="818" font-size="20" fill="#2a2a2a" letter-spacing="0.3">Ottawa</text><text x="795" y="873" font-size="19.6" fill="#2a2a2a" letter-spacing="0.5">Toronto</text><text x="900" y="984" font-size="20" fill="#2a2a2a" letter-spacing="0.3">New York</text></g>
<circle cx="909.5" cy="829.7" r="4.4" fill="none" stroke="#555" stroke-width="1.8"/><circle cx="909.5" cy="829.7" r="1.8" fill="#555"/>
<circle cx="944.5" cy="962.8" r="3.5" fill="#fff" stroke="#777" stroke-width="1.5"/>
<circle cx="107.7" cy="651.6" r="15.75" fill="#e05252" stroke="#fff" stroke-width="3.5"/>
<circle cx="954" cy="826" r="15.75" fill="#f0c04c" stroke="#fff" stroke-width="3.5"/>
<circle cx="831.8" cy="880.9" r="15.75" fill="#52b788" stroke="#fff" stroke-width="3.5"/>
</svg>
</div>
<div style="position:absolute;left:995px;top:193px;width:2px;height:797px;background:#262626"></div>

<!-- map overlays -->
<div style="position:absolute;left:55px;top:211.5px;width:46px;height:93px;background:#fff;border:2px solid #cbcbcb;border-radius:8px"></div>
<div style="position:absolute;left:57px;top:257px;width:42px;height:2px;background:#ccc"></div>
<div style="position:absolute;left:70.2px;top:235.6px;width:15.8px;height:4.2px;background:#666"></div><div style="position:absolute;left:75.8px;top:229px;width:4.2px;height:15px;background:#666"></div>

<div style="position:absolute;left:70px;top:243px;width:304px;height:71px;background:#000;border:2px solid #2a2a2e;border-radius:10px"></div>
<div style="position:absolute;left:374px;top:243px;width:272px;height:71px;background:#000;border:2px solid #2a2a2e;border-radius:10px"></div>
<div style="position:absolute;left:646px;top:243px;width:212px;height:71px;background:#000;border:2px solid #2a2a2e;border-radius:10px"></div>
<div class="a rg" id="s1" style="left:96px;top:266px;font-size:29.2px;color:#fff;letter-spacing:-0.15px">All Regions</div>
<div class="a rg" id="s2" style="left:400px;top:266px;font-size:29.2px;color:#fff;letter-spacing:0.08px">All Fuel Types</div>
<div class="a rg" id="s3" style="left:672px;top:266px;font-size:29.2px;color:#fff">All Status</div>
<svg style="position:absolute;left:0;top:0" width="1986" height="400">
 <g fill="none" stroke="#fff" stroke-width="2.6" stroke-linecap="round" stroke-linejoin="round">
  <path d="M347,275 L354,283 L361,275"/>
  <path d="M619,275 L626,283 L633,275"/>
  <path d="M831,275 L838,283 L845,275"/>
 </g>
</svg>

<!-- stat cards -->
<div style="position:absolute;left:1029px;top:225px;width:277px;height:236px;background:#0a0a0a;border:2px solid #1a3d28;border-radius:16px"></div>
<div style="position:absolute;left:1338px;top:225px;width:277px;height:236px;background:#0a0a0a;border:2px solid #1a3d28;border-radius:16px"></div>
<div style="position:absolute;left:1647px;top:225px;width:277px;height:236px;background:#0a0a0a;border:2px solid #1a3d28;border-radius:16px"></div>
<div class="a rg" id="c1l" style="left:1064px;top:267px;font-size:28.8px;color:#a1a1aa;letter-spacing:0.45px">Total Fuel</div>
<div class="a rg" id="c2l" style="left:1371px;top:267px;font-size:28.8px;color:#a1a1aa;letter-spacing:0.9px">Critical Tanks</div>
<div class="a rg" id="c3l" style="left:1681px;top:267px;font-size:28.8px;color:#a1a1aa;letter-spacing:0.58px">Avg Depletion</div>
<div class="a" id="c1v" style="left:1062px;font-size:50px;font-weight:700;color:#7af9a0;line-height:64px;top:300px;letter-spacing:0.5px;transform:scaleX(1.095);transform-origin:0 0">2.5M</div>
<div class="a" id="c1w" style="left:1062px;font-size:50px;font-weight:700;color:#7af9a0;line-height:64px;top:364px;letter-spacing:-0.9px">Gallons</div>
<div class="a" id="c2v" style="left:1370px;top:300px;font-size:50px;font-weight:700;color:#e05252;line-height:64px">10</div>
<div class="a" id="c3v" style="left:1679px;top:300px;font-size:50px;font-weight:700;color:#e9b94a;line-height:64px;letter-spacing:0.1px;transform:scaleX(1.05);transform-origin:0 0">1.8%/</div>
<div class="a" id="c3w" style="left:1680px;top:364px;font-size:50px;font-weight:700;color:#e9b94a;line-height:64px;letter-spacing:-0.5px">day</div>

<!-- chart cards -->
<div style="position:absolute;left:1029px;top:510px;width:423px;height:520px;background:#0a0a0a;border:2px solid #1a3d28;border-radius:16px"></div>
<div style="position:absolute;left:1502px;top:510px;width:421px;height:520px;background:#0a0a0a;border:2px solid #1a3d28;border-radius:16px"></div>
<div class="a" id="ch1" style="left:1064px;top:550.3px;font-size:27.4px;font-weight:700;color:#fff;letter-spacing:0.17px">Tank Status Distribution</div>
<div class="a" id="ch2" style="left:1535px;top:550.3px;font-size:27.4px;font-weight:700;color:#fff">Regional Consumption</div>

<svg style="position:absolute;left:1029px;top:510px" width="423" height="480" viewBox="1029 510 423 480">
 <g stroke="#fff" stroke-width="2">
  <path fill="#55b889" d="M1400.50,815.00 A160,160 0 1 0 1125.89,926.65 L1154.54,898.73 A120,120 0 1 1 1360.50,815.00 Z"/>
  <path fill="#f0c04c" d="M1136.06,936.21 A160,160 0 0 0 1354.62,927.15 L1326.09,899.11 A120,120 0 0 1 1162.17,905.91 Z"/>
  <path fill="#e05252" d="M1363.96,916.77 A160,160 0 0 0 1399.89,828.94 L1360.04,825.46 A120,120 0 0 1 1333.09,891.33 Z"/>
 </g>
</svg>

<svg style="position:absolute;left:1502px;top:510px" width="421" height="480" viewBox="1502 510 421 480">
 <g fill="#7bfaa0">
  <rect x="1670" y="625" width="42" height="319.5"/>
  <rect x="1724" y="704.7" width="42" height="239.8"/>
  <rect x="1778" y="784.8" width="42" height="159.7"/>
  <rect x="1832" y="722.8" width="42" height="221.7"/>
 </g>
 <g stroke="#888" stroke-width="2" fill="none">
  <path d="M1665,624.5 V945.5 M1653,945 H1880 M1653,624.8 H1665 M1653,705 H1665 M1653,785 H1665 M1653,865 H1665 M1746,945 V956.5 M1853.6,945 V956.5"/>
 </g>
 <g fill="#8a8a8a" font-family="Liberation Sans" font-size="25" text-anchor="end" letter-spacing="0.9">
  <text x="1648" y="642">4000</text>
  <text x="1648" y="714">3000</text>
  <text x="1648" y="794">2000</text>
  <text x="1648" y="874">1000</text>
  <text x="1648" y="953">0</text>
 </g>
 <g fill="#8a8a8a" font-family="Liberation Sans" font-size="24" text-anchor="middle" letter-spacing="0.9">
  <text x="1746" y="978">Midwest</text>
  <text x="1853.6" y="978">West</text>
 </g>
</svg>

</div>
<!-- divider + grip -->
<div style="position:absolute;left:2px;top:990px;width:1984px;height:2px;background:#262626"></div>
<div style="position:absolute;left:984px;top:975px;width:24px;height:32px;background:#27272a;border-radius:8px"></div>
<svg style="position:absolute;left:984px;top:975px" width="24" height="32"><g fill="#fff">
<circle cx="9.4" cy="10.1" r="1.8"/><circle cx="14.5" cy="10.1" r="1.8"/>
<circle cx="9.4" cy="15.9" r="1.8"/><circle cx="14.5" cy="15.9" r="1.8"/>
<circle cx="9.4" cy="21.8" r="1.8"/><circle cx="14.5" cy="21.8" r="1.8"/></g></svg>

<!-- alerts -->
<svg style="position:absolute;left:34px;top:1028px" width="32" height="32" viewBox="0 0 24 24" fill="none" stroke="#58cc84" stroke-width="2" stroke-linecap="round" stroke-linejoin="round"><path d="M6 8a6 6 0 0 1 12 0c0 7 3 9 3 9H3s3-2 3-9"/><path d="M10.3 21a1.94 1.94 0 0 0 3.4 0"/></svg>
<div class="a" id="ah" style="left:81.5px;top:1032.3px;font-size:28.6px;font-weight:700;color:#7af9a0;letter-spacing:0.1px">Recent Alerts</div>
<div style="position:absolute;left:34px;top:1080px;width:1168px;height:72px;background:#0a0a0a;border-radius:12px"></div>
<div style="position:absolute;left:34px;top:1168px;width:1168px;height:72px;background:#0a0a0a;border-radius:12px"></div>
<div style="position:absolute;left:34px;top:1256px;width:1168px;height:72px;background:#0a0a0a;border-radius:12px"></div>
<div class="a rg" id="r1" style="left:50.5px;top:1103.2px;font-size:29.3px;color:#fff;letter-spacing:0.4px">Tank 2: Low fuel warning</div>
<div class="a rg" id="r2" style="left:50.5px;top:1191px;font-size:29.3px;color:#fff;letter-spacing:0.38px">Tank 27: Low fuel warning triggered</div>
<div class="a rg" id="r3" style="left:50.5px;top:1279.1px;font-size:29.3px;color:#fff;letter-spacing:0.07px">Tank 15: Pressure threshold exceeded</div>
<div class="a rg" id="tm1" style="right:799.5px;letter-spacing:-0.15px;top:1103.1px;font-size:26.5px;color:#a1a1aa">3:43:29 p.m.</div>
<div class="a rg" id="tm2" style="right:799.5px;letter-spacing:-0.15px;top:1191px;font-size:26.5px;color:#a1a1aa">3:38:24 p.m.</div>
<div class="a rg" id="tm3" style="right:799.5px;letter-spacing:-0.15px;top:1279px;font-size:26.5px;color:#a1a1aa">3:33:24 p.m.</div>

<!-- buttons -->
<div style="position:absolute;left:1234px;top:1136px;width:356px;height:80px;background:#295333;border:2px solid #2a2a2e;border-radius:11px"></div>
<div style="position:absolute;left:1606px;top:1136px;width:351px;height:80px;background:#7bfaa0;border:2px solid #2a2a2e;border-radius:11px"></div>
<svg style="position:absolute;left:1268px;top:1160px" width="32" height="32" viewBox="0 0 24 24" fill="none" stroke="#fff" stroke-width="2" stroke-linecap="round" stroke-linejoin="round"><path d="M22 11.08V12a10 10 0 1 1-5.93-9.14"/><polyline points="22 4 12 14.01 9 11.01"/></svg>
<svg style="position:absolute;left:1640.3px;top:1160px" width="32" height="32" viewBox="0 0 24 24" fill="none" stroke="#000" stroke-width="2" stroke-linecap="round" stroke-linejoin="round"><path d="M15 2H6a2 2 0 0 0-2 2v16a2 2 0 0 0 2 2h12a2 2 0 0 0 2-2V7Z"/><path d="M14 2v4a2 2 0 0 0 2 2h4"/><path d="M10 9H8"/><path d="M16 13H8"/><path d="M16 17H8"/></svg>
<div class="a" id="b1" style="left:1333px;top:1164px;font-size:28.6px;font-weight:700;color:#fff;letter-spacing:-0.2px">Acknowledge All</div>
<div class="a" id="b2" style="left:1705px;top:1162.5px;font-size:28.9px;font-weight:700;color:#000;letter-spacing:-0.55px">Generate Report</div>

</body></html>
